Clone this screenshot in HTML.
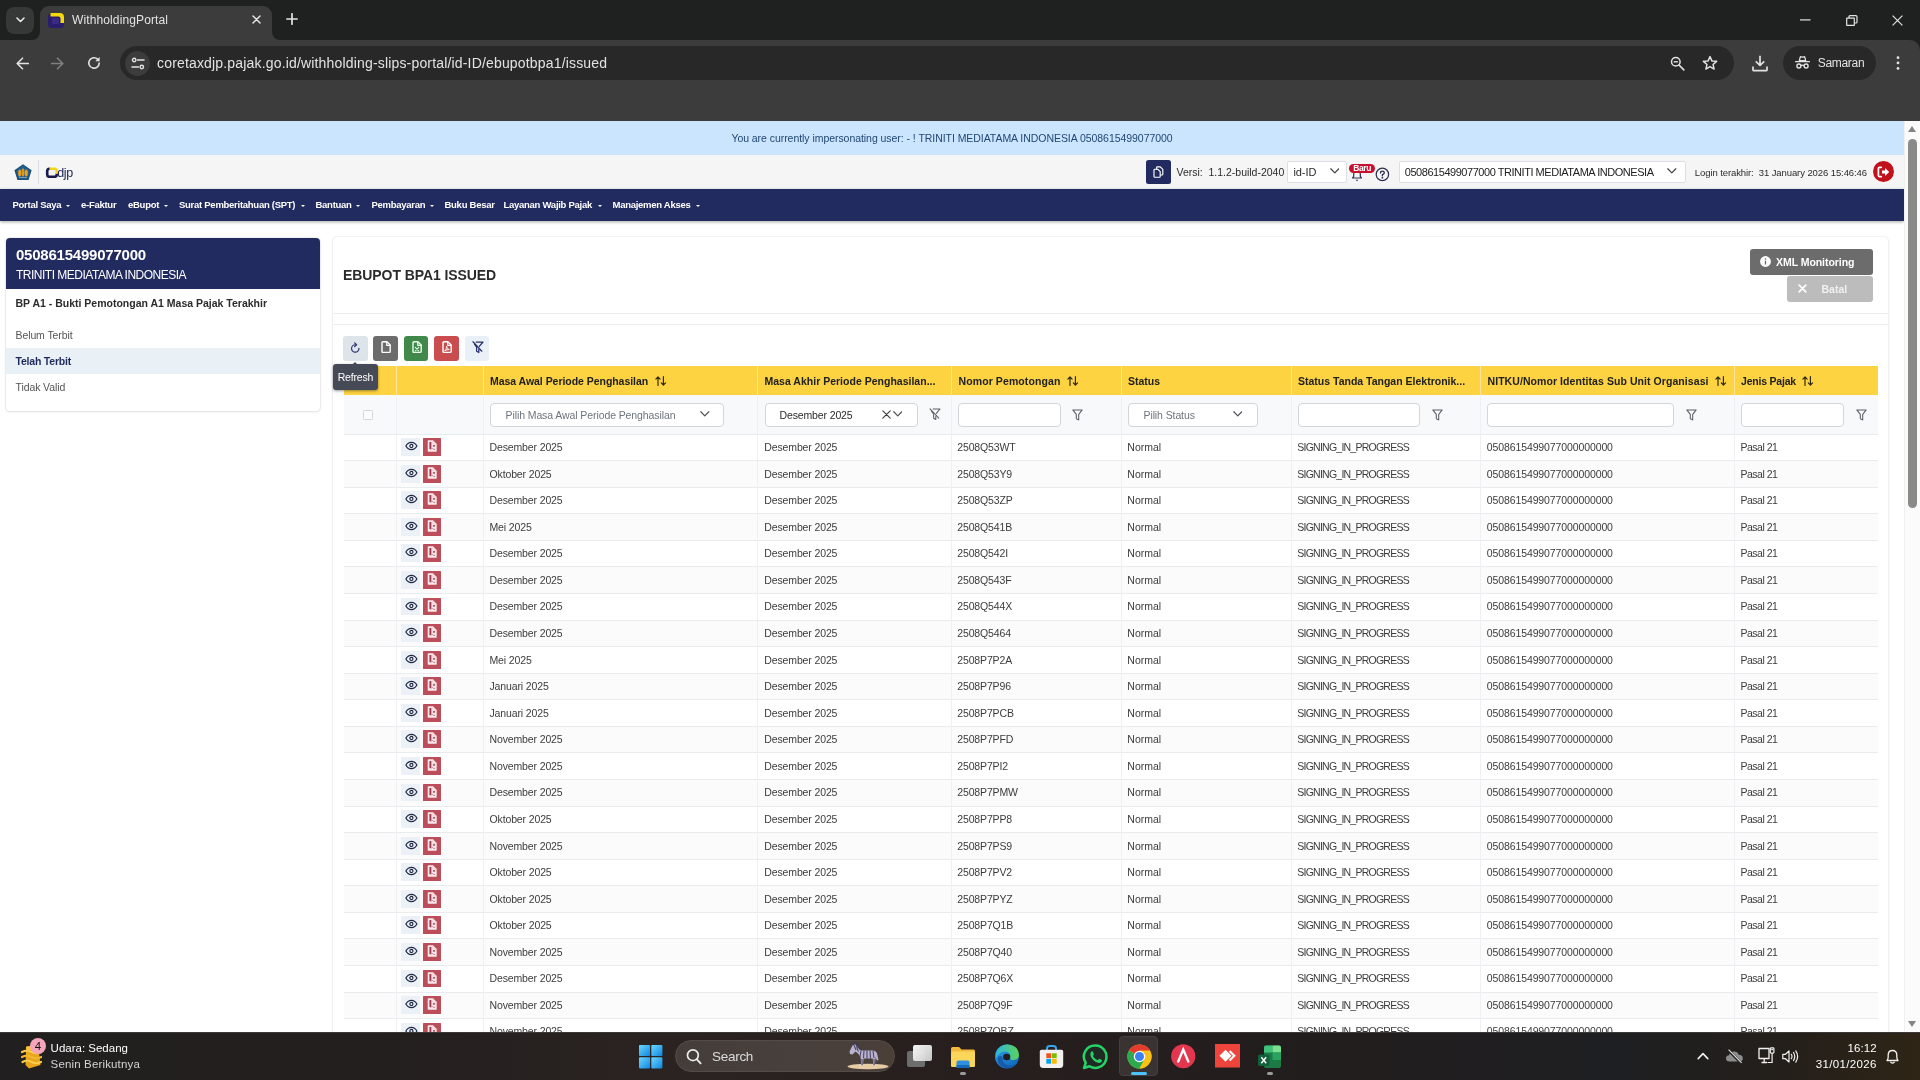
<!DOCTYPE html>
<html lang="id"><head><meta charset="utf-8"><title>WithholdingPortal</title>
<style>
*{box-sizing:border-box}
html,body{margin:0;padding:0}
body{width:1920px;height:1080px;overflow:hidden;position:relative;background:#fff;
 font-family:"Liberation Sans",sans-serif;font-size:10.5px;color:#333;-webkit-font-smoothing:antialiased}
#root{position:absolute;left:0;top:0;width:1920px;height:1080px;overflow:hidden;will-change:transform}
.abs{position:absolute}
svg{display:block}

#tabstrip{left:0;top:0;width:1920px;height:40px;background:#1f2020}
#toolbar{left:0;top:40px;width:1920px;height:81px;background:#3c3c3c;border-radius:0 10px 0 0}
#tab{left:40px;top:6px;width:232px;height:34px;background:#3c3c3c;border-radius:9px 9px 0 0}
.tabfl{position:absolute;top:32px;width:8px;height:8px;background:#3c3c3c}
.tabfl b{position:absolute;left:0;top:0;width:8px;height:8px;background:#1f2020}
#tabsearch{left:6px;top:6.500px;width:27.5px;height:27px;border-radius:8px;background:#363737}
#tabtitle{left:72px;top:13.400px;font-size:12px;line-height:14px;color:#e3e3e3;letter-spacing:.12px;white-space:nowrap}
#urlbar{left:120px;top:46.400px;width:1614px;height:33.5px;border-radius:17px;background:#282828}
#siteinfo{left:124.5px;top:50.500px;width:25.5px;height:25.5px;border-radius:13px;background:#3c3c3c}
#url{left:157px;top:54.5px;font-size:14px;line-height:16px;color:#e3e3e3;letter-spacing:.17px;white-space:nowrap}
#profile{left:1782.900px;top:46.400px;width:92.800px;height:33.5px;border-radius:17px;background:#282828}
#profile span{position:absolute;left:34.800px;top:9.500px;font-size:12px;line-height:14px;color:#e3e3e3;letter-spacing:-.3px}

#page{left:0;top:121px;width:1904px;height:911px;overflow:hidden;background:#fff}
#banner{left:0;top:0;width:1904px;height:33.75px;background:#cce5ff;color:#1f4672;text-align:center;line-height:35.500px;font-size:10.5px;letter-spacing:-.05px;white-space:nowrap}
#hdr{left:0;top:33.75px;width:1904px;height:34.5px;background:#f5f5f5}
#nav{left:0;top:68.25px;width:1904px;height:31.5px;background:#222b5f;box-shadow:0 1px 3px rgba(0,0,0,.35)}
#nav span{position:absolute;top:9.500px;color:#fff;font-weight:700;font-size:9.500px;line-height:11px;letter-spacing:-.27px;white-space:nowrap}
#nav i{position:absolute;top:15.800px;width:0;height:0;border-left:2.5px solid transparent;border-right:2.5px solid transparent;border-top:2.5px solid #fff}
.t{position:absolute;white-space:nowrap}
/* sidebar */
#side{left:6px;top:117px;width:314px;height:173px;background:#fff;border-radius:4px;box-shadow:0 0 2px rgba(0,0,0,.18),0 1px 3px rgba(0,0,0,.08)}
#sidehead{left:0;top:0;width:314px;height:51px;background:#222b5f;border-radius:4px 4px 0 0}
#side .sel{left:0;top:110px;width:314px;height:26px;background:#e9f1f7}
/* main card */
#main{left:333px;top:116.3px;width:1555px;height:900px;background:#fff;border-radius:4px;box-shadow:0 0 2px rgba(0,0,0,.16),0 1px 3px rgba(0,0,0,.06)}
.hl{position:absolute;height:1px;background:#ececec}
.btn{position:absolute;border-radius:3px}
/* table */
.th{position:absolute;top:245px;height:29px;background:#fdd341}
.thx{position:absolute;top:254px;font-weight:700;color:#212121;white-space:nowrap;font-size:10.5px;line-height:12px}
.vb{position:absolute;width:1px;background:#eef0f3}
.fr{position:absolute;left:343.5px;top:274px;width:1534.2px;height:39.4px;background:#f8f9fb}
.inp{position:absolute;top:282px;height:23.6px;border:1px solid #d2d6db;border-radius:4px;background:#fff}
.row{position:absolute;left:343.5px;width:1534.2px;border-top:1px solid #e9ecef;background:#fff}
.row.alt{background:#fbfbfc}
.c{position:absolute;white-space:nowrap;color:#3c3c3c;font-size:10.5px;line-height:12px}
.eye{position:absolute;width:18.700px;height:17.800px;background:#ecf1f7;border-radius:.5px}
.pdf{position:absolute;width:17.600px;height:17.800px;background:#bb4e5a;border-radius:.5px}
#tip{left:333px;top:243.200px;width:44.800px;height:25.400px;background:#464a56;border-radius:3px;color:#fff;font-size:10.5px;line-height:26.400px;text-align:center;letter-spacing:-.2px;box-shadow:0 1px 3px rgba(0,0,0,.4)}
#vsb{left:1904px;top:121px;width:16px;height:911px;background:#fbfbfb;border-left:1px solid #f0f0f0}
#vsbthumb{left:1908px;top:138.8px;width:8.8px;height:369.5px;border-radius:4.4px;background:#8a8b89}

#taskbar{left:0;top:1032px;width:1920px;height:48px;background:linear-gradient(90deg,#211f1f 0%,#241f1f 20%,#2a2321 35%,#271f1e 50%,#221d1d 68%,#1e1f22 84%,#241f1a 93%,#2e2516 100%);border-top:1px solid #3b3838}
#tbsearch{left:675px;top:1040px;width:220px;height:32px;border-radius:16px;background:linear-gradient(90deg,#443d3a,#48403c 60%,#4b3f38);border:1px solid #544c48}
.tbt{position:absolute;white-space:nowrap;font-family:"Liberation Sans",sans-serif}
#tbactive{left:1119px;top:1035.800px;width:39.400px;height:40.200px;border-radius:4px;background:#393332;border:1px solid #453f3e}
</style></head>
<body>
<div id="root">
<div id="tabstrip" class="abs"></div>
<div class="abs" style="left:0;top:40px;width:1920px;height:12px;background:#1f2020"></div>
<div id="toolbar" class="abs"></div>
<div id="tabsearch" class="abs"></div>
<svg class="abs" style="left:15.5px;top:17px" width="9" height="6" viewBox="0 0 9 6"><path d="M1 1l3.500 3.500L8 1" fill="none" stroke="#e8e8e8" stroke-width="1.6" stroke-linecap="round" stroke-linejoin="round"/></svg>
<div id="tab" class="abs"></div>
<div class="tabfl" style="left:32px"><b style="border-radius:0 0 8px 0"></b></div>
<div class="tabfl" style="left:272px"><b style="border-radius:0 0 0 8px"></b></div>
<svg class="abs" style="left:48px;top:12px" width="16" height="16" viewBox="0 0 16 16"><rect x="0" y="1" width="16" height="15" rx="3.500" fill="#2b1d6e"/><path d="M2.500 1h9.500a4 4 0 0 1 4 4v6h-3.500V6.500a2 2 0 0 0-2-2H2.500z" fill="#f5d90a"/><rect x="4" y="6" width="7" height="6" rx="1" fill="#3a2a86"/></svg>
<div id="tabtitle" class="abs">WithholdingPortal</div>
<svg class="abs" style="left:251.5px;top:14.6px" width="9" height="9" viewBox="0 0 9 9"><path d="M1 1l7 7M8 1l-7 7" fill="none" stroke="#e3e3e3" stroke-width="1.5" stroke-linecap="round"/></svg>
<svg class="abs" style="left:286px;top:13.2px" width="12" height="12" viewBox="0 0 12 12"><path d="M6 .8v10.400M.8 6h10.400" fill="none" stroke="#e3e3e3" stroke-width="1.7" stroke-linecap="round"/></svg>
<svg class="abs" style="left:1800px;top:18.5px" width="11" height="2" viewBox="0 0 11 2"><rect x="0" y=".3" width="10.500" height="1.200" fill="#e3e3e3"/></svg>
<svg class="abs" style="left:1845.5px;top:14.5px" width="12" height="11" viewBox="0 0 12 11"><path d="M.7 3.200h7.600v7.100H.7z" fill="none" stroke="#e3e3e3" stroke-width="1.2" stroke-linejoin="round"/><path d="M3 3V1.700Q3 .7 4 .7h5.800Q11 .7 11 1.900V7q0 1-1 1H8.500" fill="none" stroke="#e3e3e3" stroke-width="1.2" /></svg>
<svg class="abs" style="left:1891.5px;top:14.5px" width="11" height="11" viewBox="0 0 11 11"><path d="M.6.600l9.800 9.800M10.400.600L.6 10.400" fill="none" stroke="#e3e3e3" stroke-width="1.2" /></svg>
<svg class="abs" style="left:15.5px;top:56.5px" width="13" height="13" viewBox="0 0 13 13"><path d="M12.300 6.500H1.500M6.500 1.200L1.200 6.500l5.300 5.300" fill="none" stroke="#e3e3e3" stroke-width="1.6" stroke-linecap="round" stroke-linejoin="round"/></svg>
<svg class="abs" style="left:51px;top:56.5px" width="13" height="13" viewBox="0 0 13 13"><path d="M.7 6.500h10.800M6.500 1.200l5.300 5.300-5.300 5.300" fill="none" stroke="#808080" stroke-width="1.6" stroke-linecap="round" stroke-linejoin="round"/></svg>
<svg class="abs" style="left:87px;top:56px" width="14" height="14" viewBox="0 0 14 14"><path d="M12.200 7A5.200 5.200 0 1 1 10.600 3.200" fill="none" stroke="#e3e3e3" stroke-width="1.6" stroke-linecap="round"/><path d="M12.600 .9v4.300H8.300z" fill="#e3e3e3"/></svg>
<div id="urlbar" class="abs"></div>
<div id="siteinfo" class="abs"></div>
<svg class="abs" style="left:130.5px;top:57px" width="14" height="13" viewBox="0 0 14 13"><path d="M6.500 3h6.500M1 10h6.500" fill="none" stroke="#e3e3e3" stroke-width="1.5" stroke-linecap="round"/><circle cx="3.200" cy="3" r="1.700" fill="none" stroke="#e3e3e3" stroke-width="1.400"/><circle cx="10.800" cy="10" r="1.700" fill="none" stroke="#e3e3e3" stroke-width="1.400"/></svg>
<div id="url" class="abs">coretaxdjp.pajak.go.id/withholding-slips-portal/id-ID/ebupotbpa1/issued</div>
<svg class="abs" style="left:1670px;top:55.5px" width="15" height="15" viewBox="0 0 15 15"><circle cx="5.800" cy="5.800" r="4.300" fill="none" stroke="#e3e3e3" stroke-width="1.500"/><path d="M9 9l4.800 4.800" fill="none" stroke="#e3e3e3" stroke-width="1.7" stroke-linecap="round"/><path d="M3.700 5.800h4.200" fill="none" stroke="#e3e3e3" stroke-width="1.4" /></svg>
<svg class="abs" style="left:1702px;top:54.5px" width="16" height="16" viewBox="0 0 16 16"><path d="M8 1.600l1.900 4.300 4.700.45-3.550 3.100 1.050 4.600L8 11.650l-4.100 2.400 1.050-4.600L1.400 6.350l4.700-.45z" fill="none" stroke="#e3e3e3" stroke-width="1.5" stroke-linejoin="round"/></svg>
<svg class="abs" style="left:1752px;top:54.5px" width="16" height="17" viewBox="0 0 16 17"><path d="M8 .8v9.400M3.800 6.400L8 10.500l4.200-4.100" fill="none" stroke="#e3e3e3" stroke-width="1.7" stroke-linejoin="round"/><path d="M1 11.500v3.200q0 1 1 1h12q1 0 1-1v-3.200" fill="none" stroke="#e3e3e3" stroke-width="1.7" /></svg>
<div id="profile" class="abs"><span>Samaran</span></div>
<svg class="abs" style="left:1794.5px;top:56px" width="15" height="13" viewBox="0 0 15 13"><path d="M4.300 4.600L5.200 1.300Q5.400.6 6.100.8L7.500 1.200 8.900.8Q9.600.6 9.800 1.300L10.700 4.600z" fill="none" stroke="#e3e3e3" stroke-width="1.300" stroke-linejoin="round"/><path d="M.6 5.600h13.800" fill="none" stroke="#e3e3e3" stroke-width="1.4" stroke-linecap="round"/><circle cx="3.900" cy="10" r="2" fill="none" stroke="#e3e3e3" stroke-width="1.400"/><circle cx="11.100" cy="10" r="2" fill="none" stroke="#e3e3e3" stroke-width="1.400"/><path d="M5.900 9.600q1.600-.9 3.200 0" fill="none" stroke="#e3e3e3" stroke-width="1.3" /></svg>
<svg class="abs" style="left:1896.2px;top:56px" width="4" height="14" viewBox="0 0 4 14"><circle cx="2" cy="1.700" r="1.400" fill="#e3e3e3"/><circle cx="2" cy="6.900" r="1.400" fill="#e3e3e3"/><circle cx="2" cy="12.400" r="1.400" fill="#e3e3e3"/></svg><div id="page" class="abs">
<div id="banner" class="abs">You are currently impersonating user: - ! TRINITI MEDIATAMA INDONESIA 0508615499077000</div>
<div id="hdr" class="abs"><svg class="abs" style="left:14.1px;top:9.449999999999989px" width="18" height="16.5" viewBox="0 0 18 16.500" ><path d="M9 .3L17.600 6.300L14.600 16H3.400L.4 6.300z" fill="#1e4f7a"/><path d="M9 1.800L15.900 6.700L13.500 14.500H4.500L2.100 6.700z" fill="#24608f"/><ellipse cx="5.700" cy="9" rx="1.500" ry="3.600" fill="#e9a21e"/><ellipse cx="9" cy="8.500" rx="1.500" ry="4" fill="#d99a1e"/><ellipse cx="12.300" cy="9" rx="1.500" ry="3.600" fill="#e9a21e"/><rect x="4.500" y="13" width="9" height="1.600" fill="#2a5f8a"/><rect x="5.200" y="13.300" width="7.600" height=".7" fill="#9fb6c8"/></svg><div class="abs" style="left:38px;top:5.25px;width:1px;height:24px;background:#dcdce4"></div><svg class="abs" style="left:44.5px;top:12.050000000000011px" width="14" height="11.5" viewBox="0 0 14 11.500" ><path d="M2.200 7V4Q2.200 1.700 4.400 1.700H4.800M11.800 6.500V7.500Q11.800 9.800 9.500 9.800H4.400Q2.200 9.800 2.200 7.500V6.500" fill="none" stroke="#17194f" stroke-width="2.600" stroke-linecap="butt"/><path d="M4.600 1.700H9.500Q11.800 1.700 11.800 4V6.700" fill="none" stroke="#f3d321" stroke-width="2.600" stroke-linecap="butt"/></svg><div class="t" style="left:57.200px;top:11.050000000000011px;font-size:12.500px;line-height:14px;color:#20255a;letter-spacing:-.35px">djp</div><div class="abs" style="left:1146px;top:5.25px;width:25px;height:24px;background:#222b5f;border-radius:2.500px"></div><svg class="abs" style="left:1153px;top:11.25px" width="11" height="12" viewBox="0 0 11 12" ><path d="M3.600 2.800V1.600Q3.600 .8 4.400 .8H7.300L9.800 3.300V8.200Q9.800 9 9 9H7.800" fill="none" stroke="#fff" stroke-width="1.15" stroke-linejoin="round" stroke-linecap="round"/><path d="M1 4Q1 3.200 1.800 3.200H4.700L7.200 5.700V10.400Q7.200 11.200 6.400 11.200H1.800Q1 11.200 1 10.400z" fill="none" stroke="#fff" stroke-width="1.15" stroke-linejoin="round" stroke-linecap="round"/></svg><div class="t" style="left:1176.500px;top:11.25px;font-size:10.500px;line-height:12px;color:#2b2b2b;letter-spacing:-.01px">Versi:&nbsp; 1.1.2-build-2040</div><div class="abs" style="left:1287.400px;top:6.050000000000011px;width:60px;height:22.400px;background:#fff;border:1px solid #dcdfe3;border-radius:2px"></div><div class="t" style="left:1293.500px;top:10.75px;font-size:11px;line-height:13px;color:#2b2b2b;letter-spacing:-.1px">id-ID</div><svg class="abs" style="left:1329.5px;top:13.550000000000011px" width="9.6" height="6" viewBox="0 0 9.600 6" ><path d="M.8 .8L4.800 4.900L8.800 .8" fill="none" stroke="#444" stroke-width="1.25" stroke-linejoin="round" stroke-linecap="round"/></svg><svg class="abs" style="left:1350.5px;top:14.25px" width="12" height="13" viewBox="0 0 12 13" ><path d="M1.500 9H10.500L9.300 7.300V5Q9.300 2.200 6 2.200Q2.700 2.200 2.700 5V7.300z" fill="none" stroke="#2a2f5a" stroke-width="1.2" stroke-linejoin="round" stroke-linecap="round"/><path d="M4.700 10.800L6 12.200L7.300 10.800z" fill="#2a2f5a"/></svg><div class="abs" style="left:1348.700px;top:9.050000000000011px;width:26.500px;height:9.500px;border-radius:5px;background:#c8102e"></div><div class="t" style="left:1353.200px;top:8.550000000000011px;font-size:8.500px;line-height:10px;color:#fff;font-weight:700;letter-spacing:-.35px">Baru</div><svg class="abs" style="left:1374.7px;top:11.849999999999994px" width="15" height="15" viewBox="0 0 15 15" ><circle cx="7.400" cy="7.400" r="6.200" fill="none" stroke="#2a2f4a" stroke-width="1.250"/><path d="M5.500 5.900Q5.500 4.100 7.400 4.100Q9.300 4.100 9.300 5.700Q9.300 6.900 7.400 7.700V8.700" fill="none" stroke="#2a2f4a" stroke-width="1.35" stroke-linejoin="round" stroke-linecap="round"/><circle cx="7.400" cy="10.700" r=".85" fill="#2a2f4a"/></svg><div class="abs" style="left:1399.300px;top:6.050000000000011px;width:286.500px;height:22.400px;background:#fff;border:1px solid #dcdfe3;border-radius:2px"></div><div class="t" style="left:1404.800px;top:10.75px;font-size:11px;line-height:13px;color:#222;letter-spacing:-.46px">0508615499077000 TRINITI MEDIATAMA INDONESIA</div><svg class="abs" style="left:1667px;top:13.550000000000011px" width="9.6" height="6" viewBox="0 0 9.600 6" ><path d="M.8 .8L4.800 4.900L8.800 .8" fill="none" stroke="#444" stroke-width="1.25" stroke-linejoin="round" stroke-linecap="round"/></svg><div class="t" style="left:1694.800px;top:12.25px;font-size:9.500px;line-height:11px;color:#2b2b2b;letter-spacing:-.09px">Login terakhir:&nbsp; 31 January 2026 15:46:46</div><div class="abs" style="left:1873px;top:6.349999999999994px;width:21px;height:21px;border-radius:11px;background:#c1121c"></div><svg class="abs" style="left:1877px;top:10.849999999999994px" width="13" height="12" viewBox="0 0 13 12" ><path d="M4.300 1.300H2.700Q1.400 1.300 1.400 2.600V9.400Q1.400 10.700 2.700 10.700H4.300" fill="none" stroke="#fff" stroke-width="1.7" stroke-linejoin="round" stroke-linecap="round"/><path d="M5 4.400H8V1.900L12.200 6L8 10.100V7.600H5z" fill="#fff"/></svg></div>
<div id="nav" class="abs">
<span style="left:12.5px">Portal Saya</span>
<i style="left:65.5px"></i>
<span style="left:81px">e-Faktur</span>
<span style="left:128px">eBupot</span>
<i style="left:163.5px"></i>
<span style="left:179px">Surat Pemberitahuan (SPT)</span>
<i style="left:300.5px"></i>
<span style="left:315.5px">Bantuan</span>
<i style="left:356px"></i>
<span style="left:371.5px">Pembayaran</span>
<i style="left:429.5px"></i>
<span style="left:444.5px">Buku Besar</span>
<span style="left:503.5px">Layanan Wajib Pajak</span>
<i style="left:597.5px"></i>
<span style="left:612.5px">Manajemen Akses</span>
<i style="left:695.5px"></i>
</div>
<div id="side" class="abs"><div id="sidehead" class="abs"></div><div class="sel abs"></div>
<div class="t" style="left:10px;top:8px;font-size:15px;font-weight:700;color:#fff;letter-spacing:-.22px;line-height:17px">0508615499077000</div>
<div class="t" style="left:10px;top:29.700px;font-size:12px;color:#fff;letter-spacing:-.5px;line-height:14px">TRINITI MEDIATAMA INDONESIA</div>
<div class="t" style="left:9.5px;top:59px;font-weight:700;color:#2b2b2b;line-height:12px">BP A1 - Bukti Pemotongan A1 Masa Pajak Terakhir</div>
<div class="t" style="left:9.5px;top:91px;color:#555;line-height:12px;letter-spacing:-.1px">Belum Terbit</div>
<div class="t" style="left:9.5px;top:117px;color:#1f2a5c;font-weight:700;line-height:12px;letter-spacing:-.2px">Telah Terbit</div>
<div class="t" style="left:9.5px;top:143px;color:#555;line-height:12px;letter-spacing:-.1px">Tidak Valid</div>
</div>
<div id="main" class="abs"></div>
<div class="t" style="left:343px;top:146px;font-size:14px;font-weight:700;color:#2b2b2b;line-height:16px;letter-spacing:-.08px">EBUPOT BPA1 ISSUED</div>
<div class="hl" style="left:334px;top:192.2px;width:1554px"></div>
<div class="hl" style="left:334px;top:203px;width:1554px"></div>
<div class="btn" style="left:1750px;top:128.3px;width:122.7px;height:25.4px;background:#6c6c6c"></div>
<div class="t" style="left:1776px;top:135px;color:#fff;font-weight:700;line-height:12px;letter-spacing:-.05px">XML Monitoring</div>
<svg class="abs" style="left:1760.2px;top:135.1px" width="11" height="11" viewBox="0 0 11 11" ><circle cx="5.500" cy="5.500" r="5.400" fill="#fff"/><rect x="4.850" y="4.700" width="1.300" height="3.700" fill="#6c6c6c"/><circle cx="5.500" cy="3" r=".85" fill="#6c6c6c"/></svg>
<div class="btn" style="left:1787.3px;top:155px;width:85.4px;height:25.7px;background:#bcbcbc"></div>
<div class="t" style="left:1821.5px;top:162px;color:#f1f1f1;font-weight:700;line-height:12px">Batal</div>
<svg class="abs" style="left:1797.5px;top:163px" width="9" height="9" viewBox="0 0 9 9" ><path d="M1.200 1.200L7.800 7.800M7.800 1.200L1.200 7.800" fill="none" stroke="#fff" stroke-width="1.7" stroke-linejoin="round" stroke-linecap="round"/></svg>
<div class="btn" style="left:343px;top:215px;width:24.6px;height:24.8px;background:#dde5ea"></div>
<svg class="abs" style="left:350.4px;top:220.7px" width="10.5" height="11.4" viewBox="0 0 12 13" ><path d="M10.200 7.300A4.200 4.200 0 1 1 6 3.100" fill="none" stroke="#27306a" stroke-width="1.35" stroke-linejoin="round" stroke-linecap="round"/><path d="M5.300 .9L7.500 3.100L5.300 5.300" fill="none" stroke="#27306a" stroke-width="1.35" stroke-linejoin="round" stroke-linecap="round"/></svg>
<div class="btn" style="left:373.4px;top:215px;width:24.6px;height:24.8px;background:#6c6c6c"></div>
<svg class="abs" style="left:381.2px;top:220.4px" width="11" height="13" viewBox="0 0 11 13" ><path d="M1 1.800Q1 .8 2 .8H5.900L9.200 4.100V10.400Q9.200 11.400 8.200 11.400H2Q1 11.400 1 10.400z" fill="none" stroke="#fff" stroke-width="1.4" stroke-linejoin="round" stroke-linecap="round"/><path d="M5.700 1V4.300H9" fill="none" stroke="#fff" stroke-width="1.19" stroke-linejoin="round" stroke-linecap="round"/></svg>
<div class="btn" style="left:403.8px;top:215px;width:24.6px;height:24.8px;background:#40894a"></div>
<svg class="abs" style="left:411.6px;top:220.4px" width="11" height="13" viewBox="0 0 11 13" ><path d="M1 1.800Q1 .8 2 .8H5.900L9.200 4.100V10.400Q9.200 11.400 8.200 11.400H2Q1 11.400 1 10.400z" fill="none" stroke="#e9ffe9" stroke-width="1.4" stroke-linejoin="round" stroke-linecap="round"/><path d="M5.700 1V4.300H9" fill="none" stroke="#e9ffe9" stroke-width="1.19" stroke-linejoin="round" stroke-linecap="round"/><path d="M3.300 6.300L6.700 10M6.700 6.300L3.300 10" fill="none" stroke="#e9ffe9" stroke-width="1.1" stroke-linejoin="round" stroke-linecap="round"/></svg>
<div class="btn" style="left:434.2px;top:215px;width:24.6px;height:24.8px;background:#c94d4f"></div>
<svg class="abs" style="left:442.0px;top:220.4px" width="11" height="13" viewBox="0 0 11 13" ><path d="M1 1.800Q1 .8 2 .8H5.900L9.200 4.100V10.400Q9.200 11.400 8.200 11.400H2Q1 11.400 1 10.400z" fill="none" stroke="#fff" stroke-width="1.4" stroke-linejoin="round" stroke-linecap="round"/><path d="M5.700 1V4.300H9" fill="none" stroke="#fff" stroke-width="1.19" stroke-linejoin="round" stroke-linecap="round"/><path d="M3 9.600C4.300 8.300 4.800 6.500 4.600 5.200C4.800 7 5.900 8.200 7.300 8.500C5.600 8.500 4.200 8.900 3 9.600z" fill="none" stroke="#fff" stroke-width="1" stroke-linejoin="round" stroke-linecap="round"/></svg>
<div class="btn" style="left:464.6px;top:215px;width:24.6px;height:24.8px;background:#e9f0f8"></div>
<svg class="abs" style="left:471.8px;top:219.7px" width="12" height="13" viewBox="0 0 12 13" ><path d="M4.200 1H11L7.300 5.400M6.800 8.300V11.500L4.600 10.300V6L2.600 3.400" fill="none" stroke="#27306a" stroke-width="1.25" stroke-linejoin="round" stroke-linecap="round"/><path d="M1 .8L9.800 10.200" fill="none" stroke="#27306a" stroke-width="1.25" stroke-linejoin="round" stroke-linecap="round"/></svg>
<div class="th" style="left:343.5px;width:52.9px"></div>
<div class="th" style="left:396.4px;width:87.1px"></div>
<div class="th" style="left:483.5px;width:273.7px"></div>
<div class="th" style="left:757.2px;width:194.0px"></div>
<div class="th" style="left:951.2px;width:170.0px"></div>
<div class="th" style="left:1121.2px;width:170.5px"></div>
<div class="th" style="left:1291.7px;width:189.0px"></div>
<div class="th" style="left:1480.7px;width:253.6px"></div>
<div class="th" style="left:1734.3px;width:143.4px"></div>
<div class="vb" style="left:395.9px;top:245px;height:29px;background:#fee59a"></div>
<div class="vb" style="left:483.0px;top:245px;height:29px;background:#fee59a"></div>
<div class="vb" style="left:756.7px;top:245px;height:29px;background:#fee59a"></div>
<div class="vb" style="left:950.7px;top:245px;height:29px;background:#fee59a"></div>
<div class="vb" style="left:1120.7px;top:245px;height:29px;background:#fee59a"></div>
<div class="vb" style="left:1291.2px;top:245px;height:29px;background:#fee59a"></div>
<div class="vb" style="left:1480.2px;top:245px;height:29px;background:#fee59a"></div>
<div class="vb" style="left:1733.8px;top:245px;height:29px;background:#fee59a"></div>
<div class="thx" style="left:490px;letter-spacing:-0.04px">Masa Awal Periode Penghasilan</div>
<svg class="abs" style="left:654.5px;top:255.4px" width="12" height="10" viewBox="0 0 12 10" ><path d="M3 9.400V1M.9 3.100L3 .8L5.100 3.100M8.400 .6V9M6.300 6.900L8.400 9.200L10.500 6.900" fill="none" stroke="#2a2510" stroke-width="1.15" stroke-linejoin="round" stroke-linecap="round"/></svg>
<div class="thx" style="left:764.5px;letter-spacing:0.01px">Masa Akhir Periode Penghasilan...</div>
<div class="thx" style="left:958.5px;letter-spacing:0.1px">Nomor Pemotongan</div>
<svg class="abs" style="left:1067.3px;top:255.4px" width="12" height="10" viewBox="0 0 12 10" ><path d="M3 9.400V1M.9 3.100L3 .8L5.100 3.100M8.400 .6V9M6.300 6.900L8.400 9.200L10.500 6.900" fill="none" stroke="#2a2510" stroke-width="1.15" stroke-linejoin="round" stroke-linecap="round"/></svg>
<div class="thx" style="left:1128px;letter-spacing:0px">Status</div>
<div class="thx" style="left:1298px;letter-spacing:0px">Status Tanda Tangan Elektronik...</div>
<div class="thx" style="left:1487.5px;letter-spacing:0.07px">NITKU/Nomor Identitas Sub Unit Organisasi</div>
<svg class="abs" style="left:1714.5px;top:255.4px" width="12" height="10" viewBox="0 0 12 10" ><path d="M3 9.400V1M.9 3.100L3 .8L5.100 3.100M8.400 .6V9M6.300 6.900L8.400 9.200L10.500 6.900" fill="none" stroke="#2a2510" stroke-width="1.15" stroke-linejoin="round" stroke-linecap="round"/></svg>
<div class="thx" style="left:1741px;letter-spacing:-0.2px">Jenis Pajak</div>
<svg class="abs" style="left:1802px;top:255.4px" width="12" height="10" viewBox="0 0 12 10" ><path d="M3 9.400V1M.9 3.100L3 .8L5.100 3.100M8.400 .6V9M6.300 6.900L8.400 9.200L10.500 6.900" fill="none" stroke="#2a2510" stroke-width="1.15" stroke-linejoin="round" stroke-linecap="round"/></svg>
<div class="fr"></div>
<div class="abs" style="left:363px;top:289px;width:10px;height:10px;border:1px solid #d3d7dc;border-radius:1.5px;background:#fcfcfd"></div>
<div class="inp" style="left:490.4px;width:233.6px"></div>
<div class="inp" style="left:765px;width:152.7px"></div>
<div class="inp" style="left:958.3px;width:102.4px"></div>
<div class="inp" style="left:1128.3px;width:129.4px"></div>
<div class="inp" style="left:1298.3px;width:121.7px"></div>
<div class="inp" style="left:1487.3px;width:187.2px"></div>
<div class="inp" style="left:1741px;width:103.2px"></div>
<div class="c" style="left:505.5px;top:288px;color:#6c757d;letter-spacing:-.09px">Pilih Masa Awal Periode Penghasilan</div>
<div class="c" style="left:779.5px;top:288px;color:#2b2b2b;letter-spacing:-.13px">Desember 2025</div>
<div class="c" style="left:1143.5px;top:288px;color:#6c757d;letter-spacing:-.1px">Pilih Status</div>
<svg class="abs" style="left:700px;top:290px" width="9.6" height="6" viewBox="0 0 9.600 6" ><path d="M.8 .8L4.800 4.900L8.800 .8" fill="none" stroke="#4f545a" stroke-width="1.25" stroke-linejoin="round" stroke-linecap="round"/></svg>
<svg class="abs" style="left:892.6px;top:290px" width="9.6" height="6" viewBox="0 0 9.600 6" ><path d="M.8 .8L4.800 4.900L8.800 .8" fill="none" stroke="#4f545a" stroke-width="1.25" stroke-linejoin="round" stroke-linecap="round"/></svg>
<svg class="abs" style="left:1232.5px;top:290px" width="9.6" height="6" viewBox="0 0 9.600 6" ><path d="M.8 .8L4.800 4.900L8.800 .8" fill="none" stroke="#4f545a" stroke-width="1.25" stroke-linejoin="round" stroke-linecap="round"/></svg>
<svg class="abs" style="left:881.5px;top:289px" width="9" height="9" viewBox="0 0 9 9" ><path d="M.8.800L8.200 8.200M8.200.800L.8 8.200" fill="none" stroke="#3a3a3a" stroke-width="1.1" stroke-linejoin="round" stroke-linecap="round"/></svg>
<svg class="abs" style="left:928.5px;top:287px" width="12" height="13" viewBox="0 0 12 13" ><path d="M4.200 1H11L7.300 5.400M6.800 8.300V11.500L4.600 10.300V6L2.600 3.400" fill="none" stroke="#5a5f66" stroke-width="1.05" stroke-linejoin="round" stroke-linecap="round"/><path d="M1 .8L9.800 10.200" fill="none" stroke="#5a5f66" stroke-width="1.05" stroke-linejoin="round" stroke-linecap="round"/></svg>
<svg class="abs" style="left:1072.3px;top:287.5px" width="11" height="12" viewBox="0 0 11 12" ><path d="M.8 .9H10.200L6.700 5.300V10.900L4.300 9.700V5.300z" fill="none" stroke="#5a5f66" stroke-width="1.05" stroke-linejoin="round" stroke-linecap="round"/></svg>
<svg class="abs" style="left:1431.7px;top:287.5px" width="11" height="12" viewBox="0 0 11 12" ><path d="M.8 .9H10.200L6.700 5.300V10.900L4.300 9.700V5.300z" fill="none" stroke="#5a5f66" stroke-width="1.05" stroke-linejoin="round" stroke-linecap="round"/></svg>
<svg class="abs" style="left:1685.7px;top:287.5px" width="11" height="12" viewBox="0 0 11 12" ><path d="M.8 .9H10.200L6.700 5.300V10.900L4.300 9.700V5.300z" fill="none" stroke="#5a5f66" stroke-width="1.05" stroke-linejoin="round" stroke-linecap="round"/></svg>
<svg class="abs" style="left:1855.7px;top:287.5px" width="11" height="12" viewBox="0 0 11 12" ><path d="M.8 .9H10.200L6.700 5.300V10.900L4.300 9.700V5.300z" fill="none" stroke="#5a5f66" stroke-width="1.05" stroke-linejoin="round" stroke-linecap="round"/></svg>
<div class="row" style="top:312.6px;height:26.57px"></div>
<div class="eye" style="left:401.200px;top:317.2px"><svg width="19" height="18" viewBox="0 0 19 18"><path d="M4.900 8C6.300 5.600 8.200 4.400 10.400 4.400s4.100 1.200 5.500 3.600C14.500 10.400 12.600 11.600 10.400 11.600S6.300 10.400 4.900 8z" fill="none" stroke="#222a45" stroke-width="1.25" stroke-linejoin="round" stroke-linecap="round"/><circle cx="10.400" cy="8" r="1.550" fill="none" stroke="#222a45" stroke-width="1.200"/></svg></div><div class="pdf" style="left:423.200px;top:317.2px"><svg width="18" height="18" viewBox="0 0 18 18"><path d="M5.600 2.200H9.900L13.700 6V12.900Q13.700 13.800 12.800 13.800H5.600Q4.700 13.800 4.700 12.900V3.100Q4.700 2.200 5.600 2.200z" fill="#fbe8ea"/><path d="M7.400 4V11.200" stroke="#9d3850" stroke-width="1.900" fill="none"/><path d="M9.900 7.900H12.100" stroke="#a54a5c" stroke-width="1.500" fill="none"/><path d="M8.500 11.300L9.700 10.100M10.200 11.300H12.100" stroke="#b76a78" stroke-width=".9" fill="none"/><path d="M9.900 2.200V6H13.700" stroke="#f3c6cb" stroke-width=".7" fill="none"/></svg></div>
<div class="c" style="left:489.5px;top:319.95px;letter-spacing:-0.13px">Desember 2025</div>
<div class="c" style="left:764.3px;top:319.95px;letter-spacing:-0.13px">Desember 2025</div>
<div class="c" style="left:957.3px;top:319.95px;letter-spacing:-0.15px">2508Q53WT</div>
<div class="c" style="left:1127.3px;top:319.95px;letter-spacing:0px">Normal</div>
<div class="c" style="left:1297.3px;top:319.95px;letter-spacing:-0.76px">SIGNING_IN_PROGRESS</div>
<div class="c" style="left:1486.8px;top:319.95px;letter-spacing:-0.11px">0508615499077000000000</div>
<div class="c" style="left:1740.5px;top:319.95px;letter-spacing:-0.5px">Pasal 21</div>
<div class="row alt" style="top:339.17px;height:26.57px"></div>
<div class="eye" style="left:401.200px;top:343.77px"><svg width="19" height="18" viewBox="0 0 19 18"><path d="M4.900 8C6.300 5.600 8.200 4.400 10.400 4.400s4.100 1.200 5.500 3.600C14.500 10.400 12.600 11.600 10.400 11.600S6.300 10.400 4.900 8z" fill="none" stroke="#222a45" stroke-width="1.25" stroke-linejoin="round" stroke-linecap="round"/><circle cx="10.400" cy="8" r="1.550" fill="none" stroke="#222a45" stroke-width="1.200"/></svg></div><div class="pdf" style="left:423.200px;top:343.77px"><svg width="18" height="18" viewBox="0 0 18 18"><path d="M5.600 2.200H9.900L13.700 6V12.900Q13.700 13.800 12.800 13.800H5.600Q4.700 13.800 4.700 12.900V3.100Q4.700 2.200 5.600 2.200z" fill="#fbe8ea"/><path d="M7.400 4V11.200" stroke="#9d3850" stroke-width="1.900" fill="none"/><path d="M9.900 7.900H12.100" stroke="#a54a5c" stroke-width="1.500" fill="none"/><path d="M8.500 11.300L9.700 10.100M10.200 11.300H12.100" stroke="#b76a78" stroke-width=".9" fill="none"/><path d="M9.900 2.200V6H13.700" stroke="#f3c6cb" stroke-width=".7" fill="none"/></svg></div>
<div class="c" style="left:489.5px;top:346.52px;letter-spacing:-0.13px">Oktober 2025</div>
<div class="c" style="left:764.3px;top:346.52px;letter-spacing:-0.13px">Desember 2025</div>
<div class="c" style="left:957.3px;top:346.52px;letter-spacing:-0.15px">2508Q53Y9</div>
<div class="c" style="left:1127.3px;top:346.52px;letter-spacing:0px">Normal</div>
<div class="c" style="left:1297.3px;top:346.52px;letter-spacing:-0.76px">SIGNING_IN_PROGRESS</div>
<div class="c" style="left:1486.8px;top:346.52px;letter-spacing:-0.11px">0508615499077000000000</div>
<div class="c" style="left:1740.5px;top:346.52px;letter-spacing:-0.5px">Pasal 21</div>
<div class="row" style="top:365.74px;height:26.57px"></div>
<div class="eye" style="left:401.200px;top:370.34px"><svg width="19" height="18" viewBox="0 0 19 18"><path d="M4.900 8C6.300 5.600 8.200 4.400 10.400 4.400s4.100 1.200 5.500 3.600C14.500 10.400 12.600 11.600 10.400 11.600S6.300 10.400 4.900 8z" fill="none" stroke="#222a45" stroke-width="1.25" stroke-linejoin="round" stroke-linecap="round"/><circle cx="10.400" cy="8" r="1.550" fill="none" stroke="#222a45" stroke-width="1.200"/></svg></div><div class="pdf" style="left:423.200px;top:370.34px"><svg width="18" height="18" viewBox="0 0 18 18"><path d="M5.600 2.200H9.900L13.700 6V12.900Q13.700 13.800 12.800 13.800H5.600Q4.700 13.800 4.700 12.900V3.100Q4.700 2.200 5.600 2.200z" fill="#fbe8ea"/><path d="M7.400 4V11.200" stroke="#9d3850" stroke-width="1.900" fill="none"/><path d="M9.900 7.900H12.100" stroke="#a54a5c" stroke-width="1.500" fill="none"/><path d="M8.500 11.300L9.700 10.100M10.200 11.300H12.100" stroke="#b76a78" stroke-width=".9" fill="none"/><path d="M9.900 2.200V6H13.700" stroke="#f3c6cb" stroke-width=".7" fill="none"/></svg></div>
<div class="c" style="left:489.5px;top:373.09px;letter-spacing:-0.13px">Desember 2025</div>
<div class="c" style="left:764.3px;top:373.09px;letter-spacing:-0.13px">Desember 2025</div>
<div class="c" style="left:957.3px;top:373.09px;letter-spacing:-0.15px">2508Q53ZP</div>
<div class="c" style="left:1127.3px;top:373.09px;letter-spacing:0px">Normal</div>
<div class="c" style="left:1297.3px;top:373.09px;letter-spacing:-0.76px">SIGNING_IN_PROGRESS</div>
<div class="c" style="left:1486.8px;top:373.09px;letter-spacing:-0.11px">0508615499077000000000</div>
<div class="c" style="left:1740.5px;top:373.09px;letter-spacing:-0.5px">Pasal 21</div>
<div class="row alt" style="top:392.31px;height:26.57px"></div>
<div class="eye" style="left:401.200px;top:396.91px"><svg width="19" height="18" viewBox="0 0 19 18"><path d="M4.900 8C6.300 5.600 8.200 4.400 10.400 4.400s4.100 1.200 5.500 3.600C14.500 10.400 12.600 11.600 10.400 11.600S6.300 10.400 4.900 8z" fill="none" stroke="#222a45" stroke-width="1.25" stroke-linejoin="round" stroke-linecap="round"/><circle cx="10.400" cy="8" r="1.550" fill="none" stroke="#222a45" stroke-width="1.200"/></svg></div><div class="pdf" style="left:423.200px;top:396.91px"><svg width="18" height="18" viewBox="0 0 18 18"><path d="M5.600 2.200H9.900L13.700 6V12.900Q13.700 13.800 12.800 13.800H5.600Q4.700 13.800 4.700 12.900V3.100Q4.700 2.200 5.600 2.200z" fill="#fbe8ea"/><path d="M7.400 4V11.200" stroke="#9d3850" stroke-width="1.900" fill="none"/><path d="M9.900 7.900H12.100" stroke="#a54a5c" stroke-width="1.500" fill="none"/><path d="M8.500 11.300L9.700 10.100M10.200 11.300H12.100" stroke="#b76a78" stroke-width=".9" fill="none"/><path d="M9.900 2.200V6H13.700" stroke="#f3c6cb" stroke-width=".7" fill="none"/></svg></div>
<div class="c" style="left:489.5px;top:399.66px;letter-spacing:-0.13px">Mei 2025</div>
<div class="c" style="left:764.3px;top:399.66px;letter-spacing:-0.13px">Desember 2025</div>
<div class="c" style="left:957.3px;top:399.66px;letter-spacing:-0.15px">2508Q541B</div>
<div class="c" style="left:1127.3px;top:399.66px;letter-spacing:0px">Normal</div>
<div class="c" style="left:1297.3px;top:399.66px;letter-spacing:-0.76px">SIGNING_IN_PROGRESS</div>
<div class="c" style="left:1486.8px;top:399.66px;letter-spacing:-0.11px">0508615499077000000000</div>
<div class="c" style="left:1740.5px;top:399.66px;letter-spacing:-0.5px">Pasal 21</div>
<div class="row" style="top:418.88px;height:26.57px"></div>
<div class="eye" style="left:401.200px;top:423.48px"><svg width="19" height="18" viewBox="0 0 19 18"><path d="M4.900 8C6.300 5.600 8.200 4.400 10.400 4.400s4.100 1.200 5.500 3.600C14.500 10.400 12.600 11.600 10.400 11.600S6.300 10.400 4.900 8z" fill="none" stroke="#222a45" stroke-width="1.25" stroke-linejoin="round" stroke-linecap="round"/><circle cx="10.400" cy="8" r="1.550" fill="none" stroke="#222a45" stroke-width="1.200"/></svg></div><div class="pdf" style="left:423.200px;top:423.48px"><svg width="18" height="18" viewBox="0 0 18 18"><path d="M5.600 2.200H9.900L13.700 6V12.900Q13.700 13.800 12.800 13.800H5.600Q4.700 13.800 4.700 12.900V3.100Q4.700 2.200 5.600 2.200z" fill="#fbe8ea"/><path d="M7.400 4V11.200" stroke="#9d3850" stroke-width="1.900" fill="none"/><path d="M9.900 7.900H12.100" stroke="#a54a5c" stroke-width="1.500" fill="none"/><path d="M8.500 11.300L9.700 10.100M10.200 11.300H12.100" stroke="#b76a78" stroke-width=".9" fill="none"/><path d="M9.900 2.200V6H13.700" stroke="#f3c6cb" stroke-width=".7" fill="none"/></svg></div>
<div class="c" style="left:489.5px;top:426.23px;letter-spacing:-0.13px">Desember 2025</div>
<div class="c" style="left:764.3px;top:426.23px;letter-spacing:-0.13px">Desember 2025</div>
<div class="c" style="left:957.3px;top:426.23px;letter-spacing:-0.15px">2508Q542I</div>
<div class="c" style="left:1127.3px;top:426.23px;letter-spacing:0px">Normal</div>
<div class="c" style="left:1297.3px;top:426.23px;letter-spacing:-0.76px">SIGNING_IN_PROGRESS</div>
<div class="c" style="left:1486.8px;top:426.23px;letter-spacing:-0.11px">0508615499077000000000</div>
<div class="c" style="left:1740.5px;top:426.23px;letter-spacing:-0.5px">Pasal 21</div>
<div class="row alt" style="top:445.45px;height:26.57px"></div>
<div class="eye" style="left:401.200px;top:450.05px"><svg width="19" height="18" viewBox="0 0 19 18"><path d="M4.900 8C6.300 5.600 8.200 4.400 10.400 4.400s4.100 1.200 5.500 3.600C14.500 10.400 12.600 11.600 10.400 11.600S6.300 10.400 4.900 8z" fill="none" stroke="#222a45" stroke-width="1.25" stroke-linejoin="round" stroke-linecap="round"/><circle cx="10.400" cy="8" r="1.550" fill="none" stroke="#222a45" stroke-width="1.200"/></svg></div><div class="pdf" style="left:423.200px;top:450.05px"><svg width="18" height="18" viewBox="0 0 18 18"><path d="M5.600 2.200H9.900L13.700 6V12.900Q13.700 13.800 12.800 13.800H5.600Q4.700 13.800 4.700 12.900V3.100Q4.700 2.200 5.600 2.200z" fill="#fbe8ea"/><path d="M7.400 4V11.200" stroke="#9d3850" stroke-width="1.900" fill="none"/><path d="M9.900 7.900H12.100" stroke="#a54a5c" stroke-width="1.500" fill="none"/><path d="M8.500 11.300L9.700 10.100M10.200 11.300H12.100" stroke="#b76a78" stroke-width=".9" fill="none"/><path d="M9.900 2.200V6H13.700" stroke="#f3c6cb" stroke-width=".7" fill="none"/></svg></div>
<div class="c" style="left:489.5px;top:452.8px;letter-spacing:-0.13px">Desember 2025</div>
<div class="c" style="left:764.3px;top:452.8px;letter-spacing:-0.13px">Desember 2025</div>
<div class="c" style="left:957.3px;top:452.8px;letter-spacing:-0.15px">2508Q543F</div>
<div class="c" style="left:1127.3px;top:452.8px;letter-spacing:0px">Normal</div>
<div class="c" style="left:1297.3px;top:452.8px;letter-spacing:-0.76px">SIGNING_IN_PROGRESS</div>
<div class="c" style="left:1486.8px;top:452.8px;letter-spacing:-0.11px">0508615499077000000000</div>
<div class="c" style="left:1740.5px;top:452.8px;letter-spacing:-0.5px">Pasal 21</div>
<div class="row" style="top:472.02px;height:26.57px"></div>
<div class="eye" style="left:401.200px;top:476.62px"><svg width="19" height="18" viewBox="0 0 19 18"><path d="M4.900 8C6.300 5.600 8.200 4.400 10.400 4.400s4.100 1.200 5.500 3.600C14.500 10.400 12.600 11.600 10.400 11.600S6.300 10.400 4.900 8z" fill="none" stroke="#222a45" stroke-width="1.25" stroke-linejoin="round" stroke-linecap="round"/><circle cx="10.400" cy="8" r="1.550" fill="none" stroke="#222a45" stroke-width="1.200"/></svg></div><div class="pdf" style="left:423.200px;top:476.62px"><svg width="18" height="18" viewBox="0 0 18 18"><path d="M5.600 2.200H9.900L13.700 6V12.900Q13.700 13.800 12.800 13.800H5.600Q4.700 13.800 4.700 12.900V3.100Q4.700 2.200 5.600 2.200z" fill="#fbe8ea"/><path d="M7.400 4V11.200" stroke="#9d3850" stroke-width="1.900" fill="none"/><path d="M9.900 7.900H12.100" stroke="#a54a5c" stroke-width="1.500" fill="none"/><path d="M8.500 11.300L9.700 10.100M10.200 11.300H12.100" stroke="#b76a78" stroke-width=".9" fill="none"/><path d="M9.900 2.200V6H13.700" stroke="#f3c6cb" stroke-width=".7" fill="none"/></svg></div>
<div class="c" style="left:489.5px;top:479.37px;letter-spacing:-0.13px">Desember 2025</div>
<div class="c" style="left:764.3px;top:479.37px;letter-spacing:-0.13px">Desember 2025</div>
<div class="c" style="left:957.3px;top:479.37px;letter-spacing:-0.15px">2508Q544X</div>
<div class="c" style="left:1127.3px;top:479.37px;letter-spacing:0px">Normal</div>
<div class="c" style="left:1297.3px;top:479.37px;letter-spacing:-0.76px">SIGNING_IN_PROGRESS</div>
<div class="c" style="left:1486.8px;top:479.37px;letter-spacing:-0.11px">0508615499077000000000</div>
<div class="c" style="left:1740.5px;top:479.37px;letter-spacing:-0.5px">Pasal 21</div>
<div class="row alt" style="top:498.59px;height:26.57px"></div>
<div class="eye" style="left:401.200px;top:503.19px"><svg width="19" height="18" viewBox="0 0 19 18"><path d="M4.900 8C6.300 5.600 8.200 4.400 10.400 4.400s4.100 1.200 5.500 3.600C14.500 10.400 12.600 11.600 10.400 11.600S6.300 10.400 4.900 8z" fill="none" stroke="#222a45" stroke-width="1.25" stroke-linejoin="round" stroke-linecap="round"/><circle cx="10.400" cy="8" r="1.550" fill="none" stroke="#222a45" stroke-width="1.200"/></svg></div><div class="pdf" style="left:423.200px;top:503.19px"><svg width="18" height="18" viewBox="0 0 18 18"><path d="M5.600 2.200H9.900L13.700 6V12.900Q13.700 13.800 12.800 13.800H5.600Q4.700 13.800 4.700 12.900V3.100Q4.700 2.200 5.600 2.200z" fill="#fbe8ea"/><path d="M7.400 4V11.200" stroke="#9d3850" stroke-width="1.900" fill="none"/><path d="M9.900 7.900H12.100" stroke="#a54a5c" stroke-width="1.500" fill="none"/><path d="M8.500 11.300L9.700 10.100M10.200 11.300H12.100" stroke="#b76a78" stroke-width=".9" fill="none"/><path d="M9.900 2.200V6H13.700" stroke="#f3c6cb" stroke-width=".7" fill="none"/></svg></div>
<div class="c" style="left:489.5px;top:505.94px;letter-spacing:-0.13px">Desember 2025</div>
<div class="c" style="left:764.3px;top:505.94px;letter-spacing:-0.13px">Desember 2025</div>
<div class="c" style="left:957.3px;top:505.94px;letter-spacing:-0.15px">2508Q5464</div>
<div class="c" style="left:1127.3px;top:505.94px;letter-spacing:0px">Normal</div>
<div class="c" style="left:1297.3px;top:505.94px;letter-spacing:-0.76px">SIGNING_IN_PROGRESS</div>
<div class="c" style="left:1486.8px;top:505.94px;letter-spacing:-0.11px">0508615499077000000000</div>
<div class="c" style="left:1740.5px;top:505.94px;letter-spacing:-0.5px">Pasal 21</div>
<div class="row" style="top:525.16px;height:26.57px"></div>
<div class="eye" style="left:401.200px;top:529.76px"><svg width="19" height="18" viewBox="0 0 19 18"><path d="M4.900 8C6.300 5.600 8.200 4.400 10.400 4.400s4.100 1.200 5.500 3.600C14.500 10.400 12.600 11.600 10.400 11.600S6.300 10.400 4.900 8z" fill="none" stroke="#222a45" stroke-width="1.25" stroke-linejoin="round" stroke-linecap="round"/><circle cx="10.400" cy="8" r="1.550" fill="none" stroke="#222a45" stroke-width="1.200"/></svg></div><div class="pdf" style="left:423.200px;top:529.76px"><svg width="18" height="18" viewBox="0 0 18 18"><path d="M5.600 2.200H9.900L13.700 6V12.900Q13.700 13.800 12.800 13.800H5.600Q4.700 13.800 4.700 12.900V3.100Q4.700 2.200 5.600 2.200z" fill="#fbe8ea"/><path d="M7.400 4V11.200" stroke="#9d3850" stroke-width="1.900" fill="none"/><path d="M9.900 7.900H12.100" stroke="#a54a5c" stroke-width="1.500" fill="none"/><path d="M8.500 11.300L9.700 10.100M10.200 11.300H12.100" stroke="#b76a78" stroke-width=".9" fill="none"/><path d="M9.900 2.200V6H13.700" stroke="#f3c6cb" stroke-width=".7" fill="none"/></svg></div>
<div class="c" style="left:489.5px;top:532.51px;letter-spacing:-0.13px">Mei 2025</div>
<div class="c" style="left:764.3px;top:532.51px;letter-spacing:-0.13px">Desember 2025</div>
<div class="c" style="left:957.3px;top:532.51px;letter-spacing:-0.15px">2508P7P2A</div>
<div class="c" style="left:1127.3px;top:532.51px;letter-spacing:0px">Normal</div>
<div class="c" style="left:1297.3px;top:532.51px;letter-spacing:-0.76px">SIGNING_IN_PROGRESS</div>
<div class="c" style="left:1486.8px;top:532.51px;letter-spacing:-0.11px">0508615499077000000000</div>
<div class="c" style="left:1740.5px;top:532.51px;letter-spacing:-0.5px">Pasal 21</div>
<div class="row alt" style="top:551.73px;height:26.57px"></div>
<div class="eye" style="left:401.200px;top:556.33px"><svg width="19" height="18" viewBox="0 0 19 18"><path d="M4.900 8C6.300 5.600 8.200 4.400 10.400 4.400s4.100 1.200 5.500 3.600C14.500 10.400 12.600 11.600 10.400 11.600S6.300 10.400 4.900 8z" fill="none" stroke="#222a45" stroke-width="1.25" stroke-linejoin="round" stroke-linecap="round"/><circle cx="10.400" cy="8" r="1.550" fill="none" stroke="#222a45" stroke-width="1.200"/></svg></div><div class="pdf" style="left:423.200px;top:556.33px"><svg width="18" height="18" viewBox="0 0 18 18"><path d="M5.600 2.200H9.900L13.700 6V12.900Q13.700 13.800 12.800 13.800H5.600Q4.700 13.800 4.700 12.900V3.100Q4.700 2.200 5.600 2.200z" fill="#fbe8ea"/><path d="M7.400 4V11.200" stroke="#9d3850" stroke-width="1.900" fill="none"/><path d="M9.900 7.900H12.100" stroke="#a54a5c" stroke-width="1.500" fill="none"/><path d="M8.500 11.300L9.700 10.100M10.200 11.300H12.100" stroke="#b76a78" stroke-width=".9" fill="none"/><path d="M9.900 2.200V6H13.700" stroke="#f3c6cb" stroke-width=".7" fill="none"/></svg></div>
<div class="c" style="left:489.5px;top:559.08px;letter-spacing:-0.13px">Januari 2025</div>
<div class="c" style="left:764.3px;top:559.08px;letter-spacing:-0.13px">Desember 2025</div>
<div class="c" style="left:957.3px;top:559.08px;letter-spacing:-0.15px">2508P7P96</div>
<div class="c" style="left:1127.3px;top:559.08px;letter-spacing:0px">Normal</div>
<div class="c" style="left:1297.3px;top:559.08px;letter-spacing:-0.76px">SIGNING_IN_PROGRESS</div>
<div class="c" style="left:1486.8px;top:559.08px;letter-spacing:-0.11px">0508615499077000000000</div>
<div class="c" style="left:1740.5px;top:559.08px;letter-spacing:-0.5px">Pasal 21</div>
<div class="row" style="top:578.3px;height:26.57px"></div>
<div class="eye" style="left:401.200px;top:582.9px"><svg width="19" height="18" viewBox="0 0 19 18"><path d="M4.900 8C6.300 5.600 8.200 4.400 10.400 4.400s4.100 1.200 5.500 3.600C14.500 10.400 12.600 11.600 10.400 11.600S6.300 10.400 4.900 8z" fill="none" stroke="#222a45" stroke-width="1.25" stroke-linejoin="round" stroke-linecap="round"/><circle cx="10.400" cy="8" r="1.550" fill="none" stroke="#222a45" stroke-width="1.200"/></svg></div><div class="pdf" style="left:423.200px;top:582.9px"><svg width="18" height="18" viewBox="0 0 18 18"><path d="M5.600 2.200H9.900L13.700 6V12.900Q13.700 13.800 12.800 13.800H5.600Q4.700 13.800 4.700 12.900V3.100Q4.700 2.200 5.600 2.200z" fill="#fbe8ea"/><path d="M7.400 4V11.200" stroke="#9d3850" stroke-width="1.900" fill="none"/><path d="M9.900 7.900H12.100" stroke="#a54a5c" stroke-width="1.500" fill="none"/><path d="M8.500 11.300L9.700 10.100M10.200 11.300H12.100" stroke="#b76a78" stroke-width=".9" fill="none"/><path d="M9.900 2.200V6H13.700" stroke="#f3c6cb" stroke-width=".7" fill="none"/></svg></div>
<div class="c" style="left:489.5px;top:585.65px;letter-spacing:-0.13px">Januari 2025</div>
<div class="c" style="left:764.3px;top:585.65px;letter-spacing:-0.13px">Desember 2025</div>
<div class="c" style="left:957.3px;top:585.65px;letter-spacing:-0.15px">2508P7PCB</div>
<div class="c" style="left:1127.3px;top:585.65px;letter-spacing:0px">Normal</div>
<div class="c" style="left:1297.3px;top:585.65px;letter-spacing:-0.76px">SIGNING_IN_PROGRESS</div>
<div class="c" style="left:1486.8px;top:585.65px;letter-spacing:-0.11px">0508615499077000000000</div>
<div class="c" style="left:1740.5px;top:585.65px;letter-spacing:-0.5px">Pasal 21</div>
<div class="row alt" style="top:604.87px;height:26.57px"></div>
<div class="eye" style="left:401.200px;top:609.47px"><svg width="19" height="18" viewBox="0 0 19 18"><path d="M4.900 8C6.300 5.600 8.200 4.400 10.400 4.400s4.100 1.200 5.500 3.600C14.500 10.400 12.600 11.600 10.400 11.600S6.300 10.400 4.900 8z" fill="none" stroke="#222a45" stroke-width="1.25" stroke-linejoin="round" stroke-linecap="round"/><circle cx="10.400" cy="8" r="1.550" fill="none" stroke="#222a45" stroke-width="1.200"/></svg></div><div class="pdf" style="left:423.200px;top:609.47px"><svg width="18" height="18" viewBox="0 0 18 18"><path d="M5.600 2.200H9.900L13.700 6V12.900Q13.700 13.800 12.800 13.800H5.600Q4.700 13.800 4.700 12.900V3.100Q4.700 2.200 5.600 2.200z" fill="#fbe8ea"/><path d="M7.400 4V11.200" stroke="#9d3850" stroke-width="1.900" fill="none"/><path d="M9.900 7.900H12.100" stroke="#a54a5c" stroke-width="1.500" fill="none"/><path d="M8.500 11.300L9.700 10.100M10.200 11.300H12.100" stroke="#b76a78" stroke-width=".9" fill="none"/><path d="M9.900 2.200V6H13.700" stroke="#f3c6cb" stroke-width=".7" fill="none"/></svg></div>
<div class="c" style="left:489.5px;top:612.22px;letter-spacing:-0.13px">November 2025</div>
<div class="c" style="left:764.3px;top:612.22px;letter-spacing:-0.13px">Desember 2025</div>
<div class="c" style="left:957.3px;top:612.22px;letter-spacing:-0.15px">2508P7PFD</div>
<div class="c" style="left:1127.3px;top:612.22px;letter-spacing:0px">Normal</div>
<div class="c" style="left:1297.3px;top:612.22px;letter-spacing:-0.76px">SIGNING_IN_PROGRESS</div>
<div class="c" style="left:1486.8px;top:612.22px;letter-spacing:-0.11px">0508615499077000000000</div>
<div class="c" style="left:1740.5px;top:612.22px;letter-spacing:-0.5px">Pasal 21</div>
<div class="row" style="top:631.44px;height:26.57px"></div>
<div class="eye" style="left:401.200px;top:636.04px"><svg width="19" height="18" viewBox="0 0 19 18"><path d="M4.900 8C6.300 5.600 8.200 4.400 10.400 4.400s4.100 1.200 5.500 3.600C14.500 10.400 12.600 11.600 10.400 11.600S6.300 10.400 4.900 8z" fill="none" stroke="#222a45" stroke-width="1.25" stroke-linejoin="round" stroke-linecap="round"/><circle cx="10.400" cy="8" r="1.550" fill="none" stroke="#222a45" stroke-width="1.200"/></svg></div><div class="pdf" style="left:423.200px;top:636.04px"><svg width="18" height="18" viewBox="0 0 18 18"><path d="M5.600 2.200H9.900L13.700 6V12.900Q13.700 13.800 12.800 13.800H5.600Q4.700 13.800 4.700 12.900V3.100Q4.700 2.200 5.600 2.200z" fill="#fbe8ea"/><path d="M7.400 4V11.200" stroke="#9d3850" stroke-width="1.900" fill="none"/><path d="M9.900 7.900H12.100" stroke="#a54a5c" stroke-width="1.500" fill="none"/><path d="M8.500 11.300L9.700 10.100M10.200 11.300H12.100" stroke="#b76a78" stroke-width=".9" fill="none"/><path d="M9.900 2.200V6H13.700" stroke="#f3c6cb" stroke-width=".7" fill="none"/></svg></div>
<div class="c" style="left:489.5px;top:638.79px;letter-spacing:-0.13px">November 2025</div>
<div class="c" style="left:764.3px;top:638.79px;letter-spacing:-0.13px">Desember 2025</div>
<div class="c" style="left:957.3px;top:638.79px;letter-spacing:-0.15px">2508P7PI2</div>
<div class="c" style="left:1127.3px;top:638.79px;letter-spacing:0px">Normal</div>
<div class="c" style="left:1297.3px;top:638.79px;letter-spacing:-0.76px">SIGNING_IN_PROGRESS</div>
<div class="c" style="left:1486.8px;top:638.79px;letter-spacing:-0.11px">0508615499077000000000</div>
<div class="c" style="left:1740.5px;top:638.79px;letter-spacing:-0.5px">Pasal 21</div>
<div class="row alt" style="top:658.01px;height:26.57px"></div>
<div class="eye" style="left:401.200px;top:662.61px"><svg width="19" height="18" viewBox="0 0 19 18"><path d="M4.900 8C6.300 5.600 8.200 4.400 10.400 4.400s4.100 1.200 5.500 3.600C14.500 10.400 12.600 11.600 10.400 11.600S6.300 10.400 4.900 8z" fill="none" stroke="#222a45" stroke-width="1.25" stroke-linejoin="round" stroke-linecap="round"/><circle cx="10.400" cy="8" r="1.550" fill="none" stroke="#222a45" stroke-width="1.200"/></svg></div><div class="pdf" style="left:423.200px;top:662.61px"><svg width="18" height="18" viewBox="0 0 18 18"><path d="M5.600 2.200H9.900L13.700 6V12.900Q13.700 13.800 12.800 13.800H5.600Q4.700 13.800 4.700 12.900V3.100Q4.700 2.200 5.600 2.200z" fill="#fbe8ea"/><path d="M7.400 4V11.200" stroke="#9d3850" stroke-width="1.900" fill="none"/><path d="M9.900 7.900H12.100" stroke="#a54a5c" stroke-width="1.500" fill="none"/><path d="M8.500 11.300L9.700 10.100M10.200 11.300H12.100" stroke="#b76a78" stroke-width=".9" fill="none"/><path d="M9.900 2.200V6H13.700" stroke="#f3c6cb" stroke-width=".7" fill="none"/></svg></div>
<div class="c" style="left:489.5px;top:665.36px;letter-spacing:-0.13px">Desember 2025</div>
<div class="c" style="left:764.3px;top:665.36px;letter-spacing:-0.13px">Desember 2025</div>
<div class="c" style="left:957.3px;top:665.36px;letter-spacing:-0.15px">2508P7PMW</div>
<div class="c" style="left:1127.3px;top:665.36px;letter-spacing:0px">Normal</div>
<div class="c" style="left:1297.3px;top:665.36px;letter-spacing:-0.76px">SIGNING_IN_PROGRESS</div>
<div class="c" style="left:1486.8px;top:665.36px;letter-spacing:-0.11px">0508615499077000000000</div>
<div class="c" style="left:1740.5px;top:665.36px;letter-spacing:-0.5px">Pasal 21</div>
<div class="row" style="top:684.58px;height:26.57px"></div>
<div class="eye" style="left:401.200px;top:689.18px"><svg width="19" height="18" viewBox="0 0 19 18"><path d="M4.900 8C6.300 5.600 8.200 4.400 10.400 4.400s4.100 1.200 5.500 3.600C14.500 10.400 12.600 11.600 10.400 11.600S6.300 10.400 4.900 8z" fill="none" stroke="#222a45" stroke-width="1.25" stroke-linejoin="round" stroke-linecap="round"/><circle cx="10.400" cy="8" r="1.550" fill="none" stroke="#222a45" stroke-width="1.200"/></svg></div><div class="pdf" style="left:423.200px;top:689.18px"><svg width="18" height="18" viewBox="0 0 18 18"><path d="M5.600 2.200H9.900L13.700 6V12.900Q13.700 13.800 12.800 13.800H5.600Q4.700 13.800 4.700 12.900V3.100Q4.700 2.200 5.600 2.200z" fill="#fbe8ea"/><path d="M7.400 4V11.200" stroke="#9d3850" stroke-width="1.900" fill="none"/><path d="M9.900 7.900H12.100" stroke="#a54a5c" stroke-width="1.500" fill="none"/><path d="M8.500 11.300L9.700 10.100M10.200 11.300H12.100" stroke="#b76a78" stroke-width=".9" fill="none"/><path d="M9.900 2.200V6H13.700" stroke="#f3c6cb" stroke-width=".7" fill="none"/></svg></div>
<div class="c" style="left:489.5px;top:691.93px;letter-spacing:-0.13px">Oktober 2025</div>
<div class="c" style="left:764.3px;top:691.93px;letter-spacing:-0.13px">Desember 2025</div>
<div class="c" style="left:957.3px;top:691.93px;letter-spacing:-0.15px">2508P7PP8</div>
<div class="c" style="left:1127.3px;top:691.93px;letter-spacing:0px">Normal</div>
<div class="c" style="left:1297.3px;top:691.93px;letter-spacing:-0.76px">SIGNING_IN_PROGRESS</div>
<div class="c" style="left:1486.8px;top:691.93px;letter-spacing:-0.11px">0508615499077000000000</div>
<div class="c" style="left:1740.5px;top:691.93px;letter-spacing:-0.5px">Pasal 21</div>
<div class="row alt" style="top:711.15px;height:26.57px"></div>
<div class="eye" style="left:401.200px;top:715.75px"><svg width="19" height="18" viewBox="0 0 19 18"><path d="M4.900 8C6.300 5.600 8.200 4.400 10.400 4.400s4.100 1.200 5.500 3.600C14.500 10.400 12.600 11.600 10.400 11.600S6.300 10.400 4.900 8z" fill="none" stroke="#222a45" stroke-width="1.25" stroke-linejoin="round" stroke-linecap="round"/><circle cx="10.400" cy="8" r="1.550" fill="none" stroke="#222a45" stroke-width="1.200"/></svg></div><div class="pdf" style="left:423.200px;top:715.75px"><svg width="18" height="18" viewBox="0 0 18 18"><path d="M5.600 2.200H9.900L13.700 6V12.900Q13.700 13.800 12.800 13.800H5.600Q4.700 13.800 4.700 12.900V3.100Q4.700 2.200 5.600 2.200z" fill="#fbe8ea"/><path d="M7.400 4V11.200" stroke="#9d3850" stroke-width="1.900" fill="none"/><path d="M9.900 7.900H12.100" stroke="#a54a5c" stroke-width="1.500" fill="none"/><path d="M8.500 11.300L9.700 10.100M10.200 11.300H12.100" stroke="#b76a78" stroke-width=".9" fill="none"/><path d="M9.900 2.200V6H13.700" stroke="#f3c6cb" stroke-width=".7" fill="none"/></svg></div>
<div class="c" style="left:489.5px;top:718.5px;letter-spacing:-0.13px">November 2025</div>
<div class="c" style="left:764.3px;top:718.5px;letter-spacing:-0.13px">Desember 2025</div>
<div class="c" style="left:957.3px;top:718.5px;letter-spacing:-0.15px">2508P7PS9</div>
<div class="c" style="left:1127.3px;top:718.5px;letter-spacing:0px">Normal</div>
<div class="c" style="left:1297.3px;top:718.5px;letter-spacing:-0.76px">SIGNING_IN_PROGRESS</div>
<div class="c" style="left:1486.8px;top:718.5px;letter-spacing:-0.11px">0508615499077000000000</div>
<div class="c" style="left:1740.5px;top:718.5px;letter-spacing:-0.5px">Pasal 21</div>
<div class="row" style="top:737.72px;height:26.57px"></div>
<div class="eye" style="left:401.200px;top:742.32px"><svg width="19" height="18" viewBox="0 0 19 18"><path d="M4.900 8C6.300 5.600 8.200 4.400 10.400 4.400s4.100 1.200 5.500 3.600C14.500 10.400 12.600 11.600 10.400 11.600S6.300 10.400 4.900 8z" fill="none" stroke="#222a45" stroke-width="1.25" stroke-linejoin="round" stroke-linecap="round"/><circle cx="10.400" cy="8" r="1.550" fill="none" stroke="#222a45" stroke-width="1.200"/></svg></div><div class="pdf" style="left:423.200px;top:742.32px"><svg width="18" height="18" viewBox="0 0 18 18"><path d="M5.600 2.200H9.900L13.700 6V12.900Q13.700 13.800 12.800 13.800H5.600Q4.700 13.800 4.700 12.900V3.100Q4.700 2.200 5.600 2.200z" fill="#fbe8ea"/><path d="M7.400 4V11.200" stroke="#9d3850" stroke-width="1.900" fill="none"/><path d="M9.900 7.900H12.100" stroke="#a54a5c" stroke-width="1.500" fill="none"/><path d="M8.500 11.300L9.700 10.100M10.200 11.300H12.100" stroke="#b76a78" stroke-width=".9" fill="none"/><path d="M9.900 2.200V6H13.700" stroke="#f3c6cb" stroke-width=".7" fill="none"/></svg></div>
<div class="c" style="left:489.5px;top:745.07px;letter-spacing:-0.13px">Oktober 2025</div>
<div class="c" style="left:764.3px;top:745.07px;letter-spacing:-0.13px">Desember 2025</div>
<div class="c" style="left:957.3px;top:745.07px;letter-spacing:-0.15px">2508P7PV2</div>
<div class="c" style="left:1127.3px;top:745.07px;letter-spacing:0px">Normal</div>
<div class="c" style="left:1297.3px;top:745.07px;letter-spacing:-0.76px">SIGNING_IN_PROGRESS</div>
<div class="c" style="left:1486.8px;top:745.07px;letter-spacing:-0.11px">0508615499077000000000</div>
<div class="c" style="left:1740.5px;top:745.07px;letter-spacing:-0.5px">Pasal 21</div>
<div class="row alt" style="top:764.29px;height:26.57px"></div>
<div class="eye" style="left:401.200px;top:768.89px"><svg width="19" height="18" viewBox="0 0 19 18"><path d="M4.900 8C6.300 5.600 8.200 4.400 10.400 4.400s4.100 1.200 5.500 3.600C14.500 10.400 12.600 11.600 10.400 11.600S6.300 10.400 4.900 8z" fill="none" stroke="#222a45" stroke-width="1.25" stroke-linejoin="round" stroke-linecap="round"/><circle cx="10.400" cy="8" r="1.550" fill="none" stroke="#222a45" stroke-width="1.200"/></svg></div><div class="pdf" style="left:423.200px;top:768.89px"><svg width="18" height="18" viewBox="0 0 18 18"><path d="M5.600 2.200H9.900L13.700 6V12.900Q13.700 13.800 12.800 13.800H5.600Q4.700 13.800 4.700 12.900V3.100Q4.700 2.200 5.600 2.200z" fill="#fbe8ea"/><path d="M7.400 4V11.200" stroke="#9d3850" stroke-width="1.900" fill="none"/><path d="M9.900 7.900H12.100" stroke="#a54a5c" stroke-width="1.500" fill="none"/><path d="M8.500 11.300L9.700 10.100M10.200 11.300H12.100" stroke="#b76a78" stroke-width=".9" fill="none"/><path d="M9.900 2.200V6H13.700" stroke="#f3c6cb" stroke-width=".7" fill="none"/></svg></div>
<div class="c" style="left:489.5px;top:771.64px;letter-spacing:-0.13px">Oktober 2025</div>
<div class="c" style="left:764.3px;top:771.64px;letter-spacing:-0.13px">Desember 2025</div>
<div class="c" style="left:957.3px;top:771.64px;letter-spacing:-0.15px">2508P7PYZ</div>
<div class="c" style="left:1127.3px;top:771.64px;letter-spacing:0px">Normal</div>
<div class="c" style="left:1297.3px;top:771.64px;letter-spacing:-0.76px">SIGNING_IN_PROGRESS</div>
<div class="c" style="left:1486.8px;top:771.64px;letter-spacing:-0.11px">0508615499077000000000</div>
<div class="c" style="left:1740.5px;top:771.64px;letter-spacing:-0.5px">Pasal 21</div>
<div class="row" style="top:790.86px;height:26.57px"></div>
<div class="eye" style="left:401.200px;top:795.46px"><svg width="19" height="18" viewBox="0 0 19 18"><path d="M4.900 8C6.300 5.600 8.200 4.400 10.400 4.400s4.100 1.200 5.500 3.600C14.500 10.400 12.600 11.600 10.400 11.600S6.300 10.400 4.900 8z" fill="none" stroke="#222a45" stroke-width="1.25" stroke-linejoin="round" stroke-linecap="round"/><circle cx="10.400" cy="8" r="1.550" fill="none" stroke="#222a45" stroke-width="1.200"/></svg></div><div class="pdf" style="left:423.200px;top:795.46px"><svg width="18" height="18" viewBox="0 0 18 18"><path d="M5.600 2.200H9.900L13.700 6V12.900Q13.700 13.800 12.800 13.800H5.600Q4.700 13.800 4.700 12.900V3.100Q4.700 2.200 5.600 2.200z" fill="#fbe8ea"/><path d="M7.400 4V11.200" stroke="#9d3850" stroke-width="1.900" fill="none"/><path d="M9.900 7.900H12.100" stroke="#a54a5c" stroke-width="1.500" fill="none"/><path d="M8.500 11.300L9.700 10.100M10.200 11.300H12.100" stroke="#b76a78" stroke-width=".9" fill="none"/><path d="M9.900 2.200V6H13.700" stroke="#f3c6cb" stroke-width=".7" fill="none"/></svg></div>
<div class="c" style="left:489.5px;top:798.21px;letter-spacing:-0.13px">Oktober 2025</div>
<div class="c" style="left:764.3px;top:798.21px;letter-spacing:-0.13px">Desember 2025</div>
<div class="c" style="left:957.3px;top:798.21px;letter-spacing:-0.15px">2508P7Q1B</div>
<div class="c" style="left:1127.3px;top:798.21px;letter-spacing:0px">Normal</div>
<div class="c" style="left:1297.3px;top:798.21px;letter-spacing:-0.76px">SIGNING_IN_PROGRESS</div>
<div class="c" style="left:1486.8px;top:798.21px;letter-spacing:-0.11px">0508615499077000000000</div>
<div class="c" style="left:1740.5px;top:798.21px;letter-spacing:-0.5px">Pasal 21</div>
<div class="row alt" style="top:817.43px;height:26.57px"></div>
<div class="eye" style="left:401.200px;top:822.03px"><svg width="19" height="18" viewBox="0 0 19 18"><path d="M4.900 8C6.300 5.600 8.200 4.400 10.400 4.400s4.100 1.200 5.500 3.600C14.500 10.400 12.600 11.600 10.400 11.600S6.300 10.400 4.900 8z" fill="none" stroke="#222a45" stroke-width="1.25" stroke-linejoin="round" stroke-linecap="round"/><circle cx="10.400" cy="8" r="1.550" fill="none" stroke="#222a45" stroke-width="1.200"/></svg></div><div class="pdf" style="left:423.200px;top:822.03px"><svg width="18" height="18" viewBox="0 0 18 18"><path d="M5.600 2.200H9.900L13.700 6V12.900Q13.700 13.800 12.800 13.800H5.600Q4.700 13.800 4.700 12.900V3.100Q4.700 2.200 5.600 2.200z" fill="#fbe8ea"/><path d="M7.400 4V11.200" stroke="#9d3850" stroke-width="1.900" fill="none"/><path d="M9.900 7.900H12.100" stroke="#a54a5c" stroke-width="1.500" fill="none"/><path d="M8.500 11.300L9.700 10.100M10.200 11.300H12.100" stroke="#b76a78" stroke-width=".9" fill="none"/><path d="M9.900 2.200V6H13.700" stroke="#f3c6cb" stroke-width=".7" fill="none"/></svg></div>
<div class="c" style="left:489.5px;top:824.78px;letter-spacing:-0.13px">November 2025</div>
<div class="c" style="left:764.3px;top:824.78px;letter-spacing:-0.13px">Desember 2025</div>
<div class="c" style="left:957.3px;top:824.78px;letter-spacing:-0.15px">2508P7Q40</div>
<div class="c" style="left:1127.3px;top:824.78px;letter-spacing:0px">Normal</div>
<div class="c" style="left:1297.3px;top:824.78px;letter-spacing:-0.76px">SIGNING_IN_PROGRESS</div>
<div class="c" style="left:1486.8px;top:824.78px;letter-spacing:-0.11px">0508615499077000000000</div>
<div class="c" style="left:1740.5px;top:824.78px;letter-spacing:-0.5px">Pasal 21</div>
<div class="row" style="top:844.0px;height:26.57px"></div>
<div class="eye" style="left:401.200px;top:848.6px"><svg width="19" height="18" viewBox="0 0 19 18"><path d="M4.900 8C6.300 5.600 8.200 4.400 10.400 4.400s4.100 1.200 5.500 3.600C14.500 10.400 12.600 11.600 10.400 11.600S6.300 10.400 4.900 8z" fill="none" stroke="#222a45" stroke-width="1.25" stroke-linejoin="round" stroke-linecap="round"/><circle cx="10.400" cy="8" r="1.550" fill="none" stroke="#222a45" stroke-width="1.200"/></svg></div><div class="pdf" style="left:423.200px;top:848.6px"><svg width="18" height="18" viewBox="0 0 18 18"><path d="M5.600 2.200H9.900L13.700 6V12.900Q13.700 13.800 12.800 13.800H5.600Q4.700 13.800 4.700 12.900V3.100Q4.700 2.200 5.600 2.200z" fill="#fbe8ea"/><path d="M7.400 4V11.200" stroke="#9d3850" stroke-width="1.900" fill="none"/><path d="M9.900 7.900H12.100" stroke="#a54a5c" stroke-width="1.500" fill="none"/><path d="M8.500 11.300L9.700 10.100M10.200 11.300H12.100" stroke="#b76a78" stroke-width=".9" fill="none"/><path d="M9.900 2.200V6H13.700" stroke="#f3c6cb" stroke-width=".7" fill="none"/></svg></div>
<div class="c" style="left:489.5px;top:851.35px;letter-spacing:-0.13px">Desember 2025</div>
<div class="c" style="left:764.3px;top:851.35px;letter-spacing:-0.13px">Desember 2025</div>
<div class="c" style="left:957.3px;top:851.35px;letter-spacing:-0.15px">2508P7Q6X</div>
<div class="c" style="left:1127.3px;top:851.35px;letter-spacing:0px">Normal</div>
<div class="c" style="left:1297.3px;top:851.35px;letter-spacing:-0.76px">SIGNING_IN_PROGRESS</div>
<div class="c" style="left:1486.8px;top:851.35px;letter-spacing:-0.11px">0508615499077000000000</div>
<div class="c" style="left:1740.5px;top:851.35px;letter-spacing:-0.5px">Pasal 21</div>
<div class="row alt" style="top:870.57px;height:26.57px"></div>
<div class="eye" style="left:401.200px;top:875.17px"><svg width="19" height="18" viewBox="0 0 19 18"><path d="M4.900 8C6.300 5.600 8.200 4.400 10.400 4.400s4.100 1.200 5.500 3.600C14.500 10.400 12.600 11.600 10.400 11.600S6.300 10.400 4.900 8z" fill="none" stroke="#222a45" stroke-width="1.25" stroke-linejoin="round" stroke-linecap="round"/><circle cx="10.400" cy="8" r="1.550" fill="none" stroke="#222a45" stroke-width="1.200"/></svg></div><div class="pdf" style="left:423.200px;top:875.17px"><svg width="18" height="18" viewBox="0 0 18 18"><path d="M5.600 2.200H9.900L13.700 6V12.900Q13.700 13.800 12.800 13.800H5.600Q4.700 13.800 4.700 12.900V3.100Q4.700 2.200 5.600 2.200z" fill="#fbe8ea"/><path d="M7.400 4V11.200" stroke="#9d3850" stroke-width="1.900" fill="none"/><path d="M9.900 7.900H12.100" stroke="#a54a5c" stroke-width="1.500" fill="none"/><path d="M8.500 11.300L9.700 10.100M10.200 11.300H12.100" stroke="#b76a78" stroke-width=".9" fill="none"/><path d="M9.900 2.200V6H13.700" stroke="#f3c6cb" stroke-width=".7" fill="none"/></svg></div>
<div class="c" style="left:489.5px;top:877.92px;letter-spacing:-0.13px">November 2025</div>
<div class="c" style="left:764.3px;top:877.92px;letter-spacing:-0.13px">Desember 2025</div>
<div class="c" style="left:957.3px;top:877.92px;letter-spacing:-0.15px">2508P7Q9F</div>
<div class="c" style="left:1127.3px;top:877.92px;letter-spacing:0px">Normal</div>
<div class="c" style="left:1297.3px;top:877.92px;letter-spacing:-0.76px">SIGNING_IN_PROGRESS</div>
<div class="c" style="left:1486.8px;top:877.92px;letter-spacing:-0.11px">0508615499077000000000</div>
<div class="c" style="left:1740.5px;top:877.92px;letter-spacing:-0.5px">Pasal 21</div>
<div class="row" style="top:897.14px;height:26.57px"></div>
<div class="eye" style="left:401.200px;top:901.74px"><svg width="19" height="18" viewBox="0 0 19 18"><path d="M4.900 8C6.300 5.600 8.200 4.400 10.400 4.400s4.100 1.200 5.500 3.600C14.500 10.400 12.600 11.600 10.400 11.600S6.300 10.400 4.900 8z" fill="none" stroke="#222a45" stroke-width="1.25" stroke-linejoin="round" stroke-linecap="round"/><circle cx="10.400" cy="8" r="1.550" fill="none" stroke="#222a45" stroke-width="1.200"/></svg></div><div class="pdf" style="left:423.200px;top:901.74px"><svg width="18" height="18" viewBox="0 0 18 18"><path d="M5.600 2.200H9.900L13.700 6V12.900Q13.700 13.800 12.800 13.800H5.600Q4.700 13.800 4.700 12.900V3.100Q4.700 2.200 5.600 2.200z" fill="#fbe8ea"/><path d="M7.400 4V11.200" stroke="#9d3850" stroke-width="1.900" fill="none"/><path d="M9.900 7.900H12.100" stroke="#a54a5c" stroke-width="1.500" fill="none"/><path d="M8.500 11.300L9.700 10.100M10.200 11.300H12.100" stroke="#b76a78" stroke-width=".9" fill="none"/><path d="M9.900 2.200V6H13.700" stroke="#f3c6cb" stroke-width=".7" fill="none"/></svg></div>
<div class="c" style="left:489.5px;top:904.49px;letter-spacing:-0.13px">November 2025</div>
<div class="c" style="left:764.3px;top:904.49px;letter-spacing:-0.13px">Desember 2025</div>
<div class="c" style="left:957.3px;top:904.49px;letter-spacing:-0.15px">2508P7QBZ</div>
<div class="c" style="left:1127.3px;top:904.49px;letter-spacing:0px">Normal</div>
<div class="c" style="left:1297.3px;top:904.49px;letter-spacing:-0.76px">SIGNING_IN_PROGRESS</div>
<div class="c" style="left:1486.8px;top:904.49px;letter-spacing:-0.11px">0508615499077000000000</div>
<div class="c" style="left:1740.5px;top:904.49px;letter-spacing:-0.5px">Pasal 21</div>
<div class="vb" style="left:395.9px;top:274px;height:640px"></div>
<div class="vb" style="left:483.0px;top:274px;height:640px"></div>
<div class="vb" style="left:756.7px;top:274px;height:640px"></div>
<div class="vb" style="left:950.7px;top:274px;height:640px"></div>
<div class="vb" style="left:1120.7px;top:274px;height:640px"></div>
<div class="vb" style="left:1291.2px;top:274px;height:640px"></div>
<div class="vb" style="left:1480.2px;top:274px;height:640px"></div>
<div class="vb" style="left:1733.8px;top:274px;height:640px"></div>
<div class="abs" style="left:352.800px;top:240.6px;width:0;height:0;border-left:2.400px solid transparent;border-right:2.400px solid transparent;border-bottom:2.600px solid #464a56"></div>
<div id="tip" class="abs">Refresh</div>
</div>
<div id="vsb" class="abs"></div><div id="vsbthumb" class="abs"></div>
<div class="abs" style="left:1908px;top:126.2px;width:0;height:0;border-left:4.4px solid transparent;border-right:4.4px solid transparent;border-bottom:6.5px solid #858585"></div>
<div class="abs" style="left:1908px;top:1021px;width:0;height:0;border-left:4.4px solid transparent;border-right:4.4px solid transparent;border-top:6.5px solid #858585"></div><div id="taskbar" class="abs"></div>
<svg class="abs" style="left:20.5px;top:1043.5px" width="21.5" height="25" viewBox="0 0 21.500 25"><path d="M5 2.500L17 .5L19.500 21L8 24.500L4.500 21z" fill="#e9a51c"/><path d="M1 8Q6 5.500 10.500 8T20.500 8" fill="none" stroke="#f7cc4a" stroke-width="2.200" stroke-linecap="round"/><path d="M1 13Q6 10.500 10.500 13T20.500 13" fill="none" stroke="#f2b730" stroke-width="2.200" stroke-linecap="round"/><path d="M1.500 18Q6 15.500 10.500 18T20 18" fill="none" stroke="#f7cc4a" stroke-width="2.200" stroke-linecap="round"/><path d="M5 3L11 2L12 6L6 7z" fill="#f6c33c"/></svg>
<div class="abs" style="left:30px;top:1038.300px;width:15.800px;height:15.800px;border-radius:8px;background:#f5a5b9"></div>
<div class="tbt" style="left:34.700px;top:1039.800px;font-size:11.500px;line-height:13px;color:#1a1014">4</div>
<div class="tbt" style="left:50.600px;top:1041.600px;font-size:11.500px;line-height:13px;color:#fff;letter-spacing:0">Udara: Sedang</div>
<div class="tbt" style="left:50.600px;top:1057.500px;font-size:11.500px;line-height:13px;color:#d4d4d4;letter-spacing:.15px">Senin Berikutnya</div>
<svg class="abs" style="left:639px;top:1044.5px" width="24" height="24" viewBox="0 0 24 24"><defs><linearGradient id="wg" x1="0" y1="0" x2="1" y2="1"><stop offset="0" stop-color="#6ad6ff"/><stop offset="1" stop-color="#0f86e0"/></linearGradient></defs><rect x="0" y="0" width="11.100" height="11.100" rx=".8" fill="url(#wg)"/><rect x="12.300" y="0" width="11.100" height="11.100" rx=".8" fill="url(#wg)"/><rect x="0" y="12.300" width="11.100" height="11.100" rx=".8" fill="url(#wg)"/><rect x="12.300" y="12.300" width="11.100" height="11.100" rx=".8" fill="url(#wg)"/></svg>
<div id="tbsearch" class="abs"></div>
<svg class="abs" style="left:685.5px;top:1048px" width="16" height="17" viewBox="0 0 16 17"><circle cx="6.900" cy="7.200" r="5.400" fill="none" stroke="#ececec" stroke-width="1.700"/><path d="M10.900 11.400L14.600 15.300" stroke="#ececec" stroke-width="1.900" stroke-linecap="round"/></svg>
<div class="tbt" style="left:712px;top:1048.500px;font-size:13.500px;line-height:16px;color:#dcdcdc;letter-spacing:-.28px">Search</div>
<svg class="abs" style="left:844px;top:1042px" width="46" height="28" viewBox="0 0 46 28"><ellipse cx="24" cy="24.500" rx="20.500" ry="2.800" fill="#e6cda6"/><path d="M5.500 9.500L8.500 3.500L11 2L12.500 4.500L17 8.500H28Q33 8.500 33.500 13.500L34.500 18L33 18.500L31.500 15L31 23.500H29.300L28.700 16.500L19.500 16.500L19 23.500H17.300L16.800 16L14.500 12L11.500 9.500L8.500 12.500L6 12z" fill="#b9b3d0"/><path d="M10 3L12 8M12.500 5L14.500 9.500M17 8.500L16 15M20 8.500L19.500 16M23 8.500L23 16.500M26 8.500L26.500 16.500M29 8.700L30 16M18 17L18.200 23M30 17L30.200 23" stroke="#4d4668" stroke-width="1.100" fill="none"/><path d="M8 2.500L11.500 1L16.500 7.500" fill="none" stroke="#3f3a55" stroke-width="1.400"/></svg>
<div class="abs" style="left:906.700px;top:1051.200px;width:18.500px;height:16px;border-radius:2px;background:#6d6d6d"></div>
<div class="abs" style="left:912.500px;top:1044.500px;width:19.200px;height:16px;border-radius:2px;background:linear-gradient(135deg,#ffffff,#cfcfcf);opacity:.95"></div>
<svg class="abs" style="left:950px;top:1044.5px" width="26" height="24" viewBox="0 0 26 24"><path d="M1 3.500Q1 2 2.500 2H9L11.500 4.500H23.500Q25 4.500 25 6V20Q25 21.500 23.500 21.500H2.500Q1 21.500 1 20z" fill="#f3b93a"/><path d="M1 8Q1 6.500 2.500 6.500H23.500Q25 6.500 25 8V20.500Q25 22 23.500 22H2.500Q1 22 1 20.500z" fill="#fbd65b"/><path d="M6.500 17Q6.500 15.500 8 15.500H18Q19.500 15.500 19.500 17V22.500H6.500z" fill="#2f8fe0"/><rect x="6.500" y="20" width="13" height="3" fill="#1668b8"/></svg>
<div class="abs" style="left:959.700px;top:1072px;width:6.500px;height:3px;border-radius:1.500px;background:#9b9b9b"></div>
<svg class="abs" style="left:994px;top:1044px" width="26" height="25" viewBox="0 0 26 25"><defs><linearGradient id="eg" x1="0" y1="0" x2="1" y2="1"><stop offset="0" stop-color="#2fa4ea"/><stop offset="1" stop-color="#0d5fb8"/></linearGradient><linearGradient id="eg2" x1="0" y1="0" x2="1" y2="0"><stop offset="0" stop-color="#2fb8d8"/><stop offset="1" stop-color="#5bd15a"/></linearGradient></defs><circle cx="13" cy="12.500" r="12" fill="url(#eg)"/><path d="M2 9.500Q5 .5 13.500 .5Q24.500 1 25 11.500Q24.500 16 19.500 16Q15.500 16 16 13Q17 10.500 14.500 8.500Q10 6 5.500 9.500Q3 11.500 2 14z" fill="url(#eg2)"/><path d="M8.500 13Q8 18.500 13 21Q17 22.500 21.500 20Q17 25.500 10.500 24Q3.500 21.500 3.500 14.500Q5 10.500 8.500 13z" fill="#1556a5" opacity=".85"/><ellipse cx="12.700" cy="13" rx="3.600" ry="3.300" fill="#241f1f"/></svg>
<svg class="abs" style="left:1038.5px;top:1042.5px" width="25" height="26" viewBox="0 0 25 26"><path d="M8 7V5.500Q8 3 10.500 3H14.500Q17 3 17 5.500V7" fill="none" stroke="#35a5ee" stroke-width="2"/><path d="M.8 8.500Q.8 6.800 2.500 6.800H22.500Q24.200 6.800 24.200 8.500V21.500Q24.200 25 20.700 25H4.300Q.8 25 .8 21.500z" fill="#f2f1f0"/><rect x="7.300" y="10.300" width="4.800" height="4.800" fill="#f25022"/><rect x="12.900" y="10.300" width="4.800" height="4.800" fill="#7fba00"/><rect x="7.300" y="15.900" width="4.800" height="4.800" fill="#00a4ef"/><rect x="12.900" y="15.900" width="4.800" height="4.800" fill="#ffb900"/></svg>
<svg class="abs" style="left:1082px;top:1043.5px" width="26.5" height="26" viewBox="0 0 26.500 26"><path d="M13.500 1.500A11.200 11.200 0 1 1 7.500 22.300L2 24L3.700 18.800A11.200 11.200 0 0 1 13.500 1.500z" fill="#1f2a22" stroke="#25d366" stroke-width="2.500" stroke-linejoin="round"/><path d="M9.500 7.500Q10.500 6.800 11 8L11.800 9.800Q12 10.500 11.300 11.200Q10.700 11.800 11.500 13Q13 15.200 15.200 16Q16 16.300 16.500 15.500Q17.200 14.500 18 15L19.800 16Q20.500 16.500 19.800 17.600Q18.500 19.500 16 18.800Q11.500 17.500 9 13Q7.500 9.500 9.500 7.500z" fill="#25d366"/></svg>
<div id="tbactive" class="abs"></div>
<svg class="abs" style="left:1126.5px;top:1043.5px" width="25" height="25" viewBox="0 0 25 25"><circle cx="12.500" cy="12.500" r="12" fill="#fbc116"/><path d="M12.500 12.500L2.100 6.500A12 12 0 0 1 22.900 6.500z" fill="#e33b2e"/><path d="M12.500 .5A12 12 0 0 1 22.900 6.500H12.500z" fill="#e33b2e"/><path d="M2.100 6.500A12 12 0 0 0 12.500 24.500L17.500 15.500L12.500 12.500z" fill="#2da94f"/><path d="M2.100 6.500L7.300 15.500L12.500 24.500A12 12 0 0 1 2.100 6.500z" fill="#2da94f"/><path d="M22.900 6.500A12 12 0 0 1 12.500 24.500L17.700 15.500A6 6 0 0 0 17.700 9.500L12.500 6.500z" fill="#fbc116"/><circle cx="12.500" cy="12.500" r="5.700" fill="#fff"/><circle cx="12.500" cy="12.500" r="4.500" fill="#3b7ff0"/></svg>
<div class="abs" style="left:1131.200px;top:1071.800px;width:16px;height:3.600px;border-radius:1.800px;background:#4cc2ff"></div>
<svg class="abs" style="left:1171px;top:1044px" width="24.5" height="24.5" viewBox="0 0 24.500 24.500"><circle cx="12.250" cy="12.250" r="12.100" fill="#e5364f"/><path d="M6.800 18.500L12.250 5.500L17.700 18.500" fill="none" stroke="#fff" stroke-width="2.300" stroke-linejoin="miter"/></svg>
<svg class="abs" style="left:1214.7px;top:1044.2px" width="25" height="23.5" viewBox="0 0 25 23.500"><rect width="25" height="23.500" fill="#ef443b"/><path d="M10.500 5.800L16.500 11.750L10.500 17.700L4.500 11.750z" fill="#fff"/><path d="M15.300 6.300L20.800 11.750L15.300 17.200L13.800 15.700L17.800 11.750L13.800 7.800z" fill="#fff"/></svg>
<svg class="abs" style="left:1258px;top:1044.5px" width="23" height="23.5" viewBox="0 0 23 23.500"><path d="M6 2.500Q6 .5 8 .5H21Q23 .5 23 2.500V21Q23 23 21 23H8Q6 23 6 21z" fill="#1c7a45"/><path d="M6 2.500Q6 .5 8 .5H14.500V7.500H6z" fill="#3fc27a"/><path d="M14.500 .5H21Q23 .5 23 2.500V7.500H14.500z" fill="#7be08f"/><path d="M14.500 7.500H23V15H14.500z" fill="#2aa35f"/><rect x="0" y="9.500" width="11.500" height="11.500" rx="1.800" fill="#12603a"/><path d="M3.300 12.300L8.200 18.200M8.200 12.300L3.300 18.200" stroke="#fff" stroke-width="1.500"/></svg>
<div class="abs" style="left:1266.500px;top:1072px;width:6.500px;height:3px;border-radius:1.500px;background:#9b9b9b"></div>
<svg class="abs" style="left:1696.5px;top:1052px" width="12" height="8" viewBox="0 0 12 8"><path d="M1.200 6.600L6 1.600L10.800 6.600" fill="none" stroke="#f1f1f1" stroke-width="1.600" stroke-linecap="round" stroke-linejoin="round"/></svg>
<svg class="abs" style="left:1724.5px;top:1048.5px" width="19" height="15" viewBox="0 0 19 15"><path d="M4.500 12.500Q1 12.500 1 9.300Q1 6.500 4 6.200Q5 2.500 9 2.500Q12.500 2.500 13.700 5.800Q17.800 6 17.800 9.300Q17.800 12.500 14.500 12.500z" fill="#8d8d8d"/><path d="M3 .8L16 14" stroke="#241f1f" stroke-width="2.600"/><path d="M3.600 .6L16.600 13.800" stroke="#e2e2e2" stroke-width="1.100"/></svg>
<svg class="abs" style="left:1758px;top:1047px" width="17" height="17.5" viewBox="0 0 17 17.500"><path d="M1 1.500H11V11.500H1z" fill="none" stroke="#f1f1f1" stroke-width="1.300" stroke-linejoin="round"/><path d="M3.500 15.500H9M6.200 11.800V15.300" stroke="#f1f1f1" stroke-width="1.300"/><rect x="12.300" y=".8" width="3.600" height="5.300" rx=".8" fill="none" stroke="#f1f1f1" stroke-width="1.200"/><path d="M14.100 6.200V15.500H9.500" fill="none" stroke="#f1f1f1" stroke-width="1.200"/><rect x="13.300" y="1.900" width="1.600" height="1.300" fill="#f1f1f1"/></svg>
<svg class="abs" style="left:1781.5px;top:1049.5px" width="18" height="13" viewBox="0 0 18 13"><path d="M.8 4.300H3.500L7 1V12L3.500 8.700H.8z" fill="none" stroke="#f1f1f1" stroke-width="1.200" stroke-linejoin="round"/><path d="M9.300 4.300Q10.700 6.500 9.300 8.700M11.500 2.500Q14 6.500 11.500 10.500M13.800 .9Q17.500 6.500 13.800 12.100" fill="none" stroke="#f1f1f1" stroke-width="1.200" stroke-linecap="round"/></svg>
<div class="tbt" style="left:1800px;top:1042px;width:76.800px;text-align:right;font-size:11.500px;line-height:13px;color:#fff;letter-spacing:.1px">16:12</div>
<div class="tbt" style="left:1800px;top:1058px;width:76.800px;text-align:right;font-size:11.500px;line-height:13px;color:#fff;letter-spacing:.35px">31/01/2026</div>
<svg class="abs" style="left:1885px;top:1048.5px" width="15" height="15.5" viewBox="0 0 15 15.500"><path d="M2 11.500H13Q11.800 10 11.800 8V6Q11.800 1.500 7.500 1.500Q3.200 1.500 3.200 6V8Q3.200 10 2 11.500z" fill="none" stroke="#f1f1f1" stroke-width="1.300" stroke-linejoin="round"/><path d="M5.800 13.300Q7.500 15 9.200 13.300" fill="none" stroke="#f1f1f1" stroke-width="1.300" stroke-linecap="round"/></svg>
</div>
</body></html>
